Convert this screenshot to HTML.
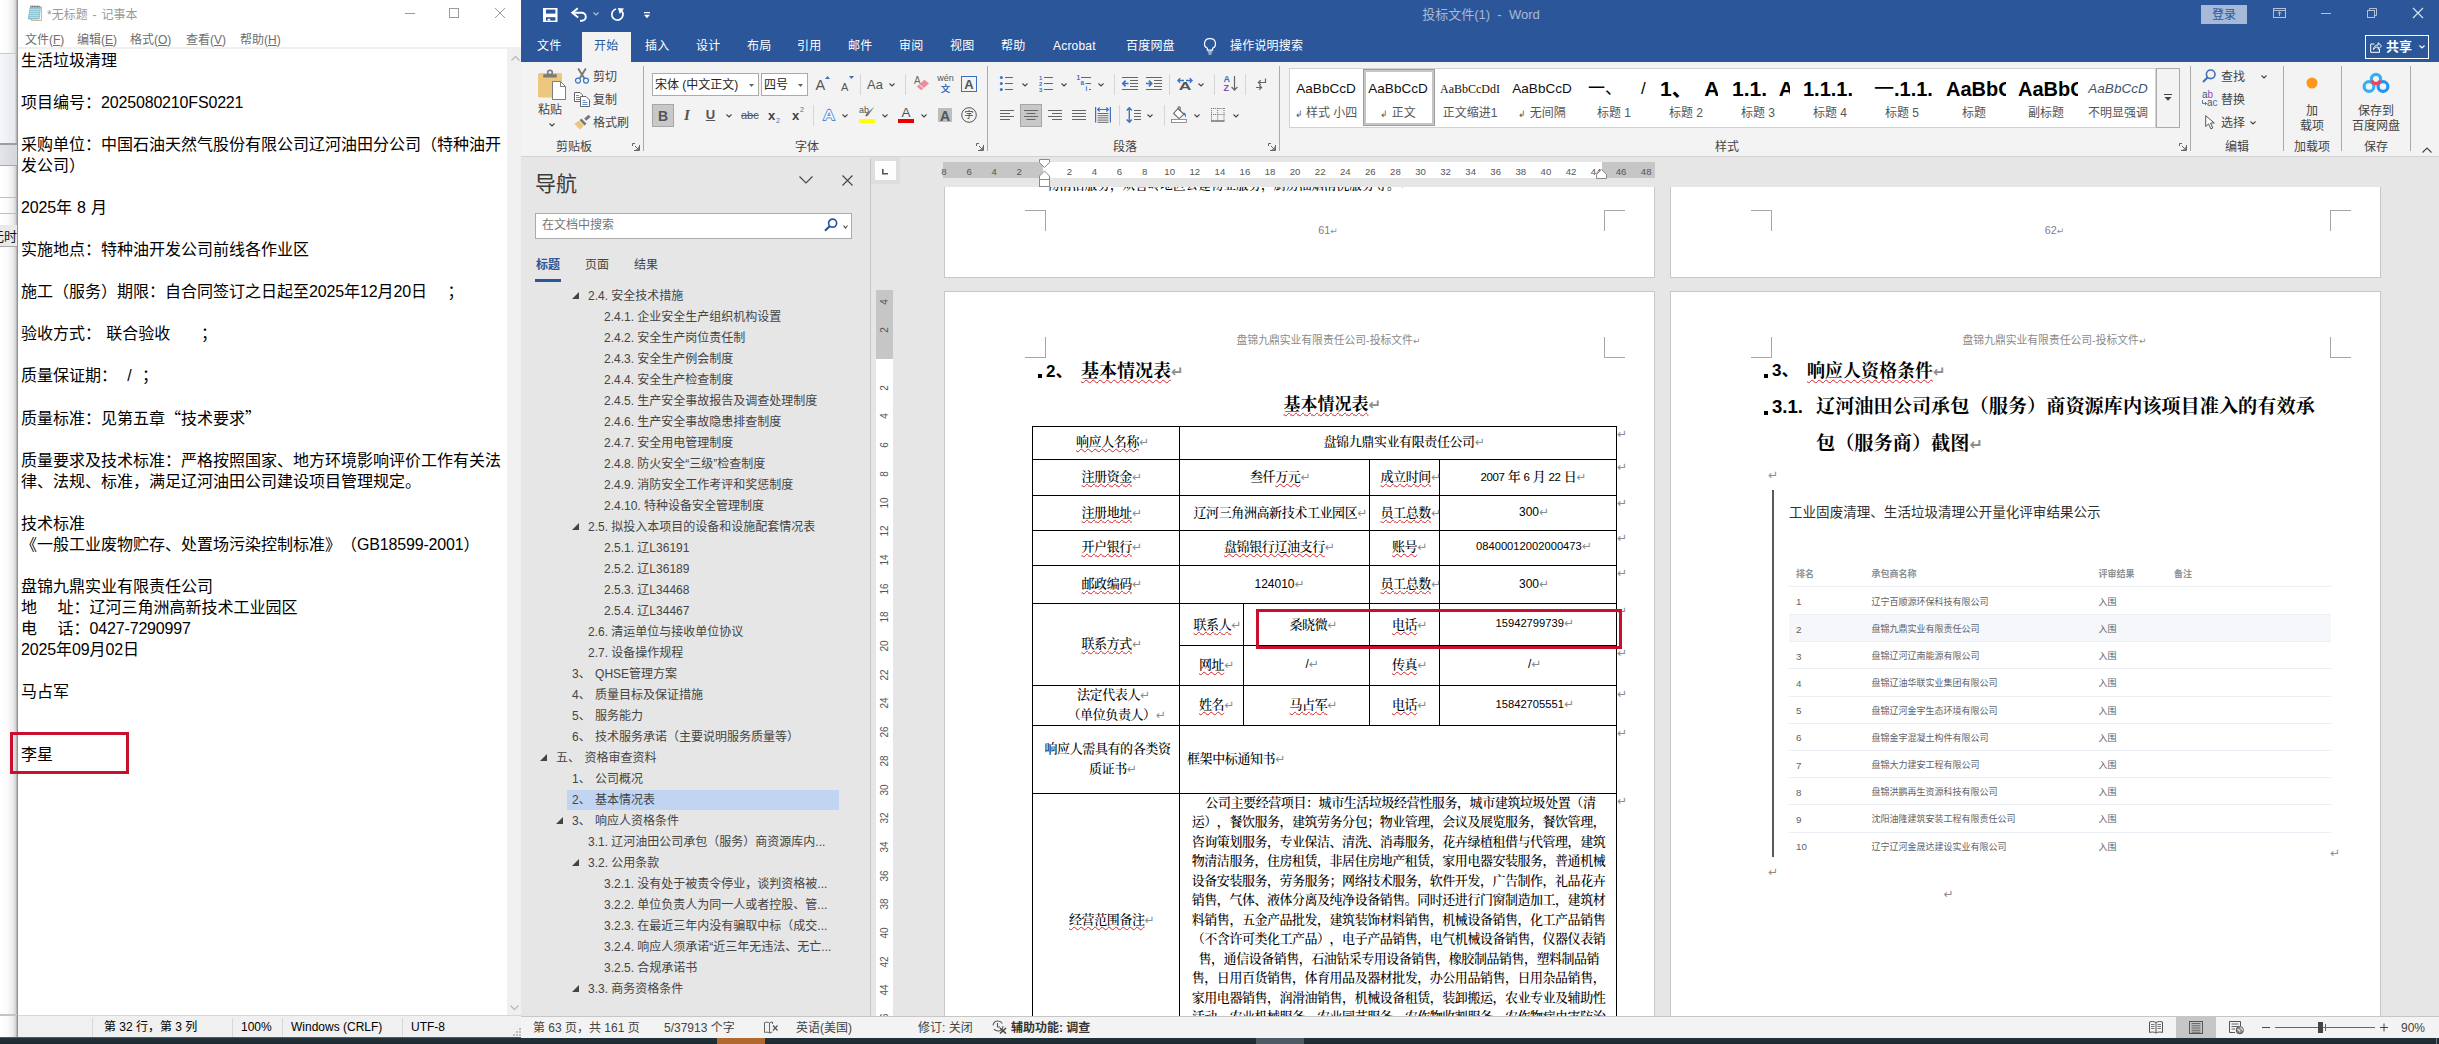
<!DOCTYPE html>
<html lang="zh-CN">
<head>
<meta charset="utf-8">
<title>screenshot</title>
<style>
*{box-sizing:border-box;margin:0;padding:0}
html,body{width:2439px;height:1044px;overflow:hidden;background:#e6e6e6}
body{position:relative;text-spacing-trim:space-all;font-family:"Liberation Sans","Noto Sans CJK SC",sans-serif;font-size:12px;color:#000}
.abs{position:absolute}
.t{position:absolute;white-space:nowrap}
svg{position:absolute;overflow:visible}
u{text-decoration:underline}
.song{font-family:"Liberation Serif","Noto Serif CJK SC",serif}
.songsans{font-family:"Liberation Sans","Noto Serif CJK SC",serif}
.pm{color:#8c8c8c;font-family:"DejaVu Sans","Liberation Sans",sans-serif}
.wavy{text-decoration:underline wavy #d8232a;text-decoration-thickness:1px;text-underline-offset:2px;text-decoration-skip-ink:none}
/* left strip */
#strip{left:0;top:0;width:18px;height:1038px;background:linear-gradient(90deg,#ffffff 0,#fbfbfb 7px,#ececec 13px,#d0d0d0 16px,#9b9b9b 17px,#8a8a8a 18px)}
/* notepad */
#np{left:18px;top:0;width:503px;height:1038px;background:#fff;overflow:hidden}
#np .menu .t{font-size:12px;color:#6e6e6e}
#nptext{left:3px;top:50px;word-spacing:.7px;font-size:16px;line-height:21px;white-space:pre;color:#000}
#np .status .t{font-size:12px;color:#000}
#np .status i{position:absolute;top:2px;width:1px;height:19px;background:#d7d7d7}
/* word */
#word{left:521px;top:0;width:1918px;height:1038px;background:#e6e6e6;overflow:hidden}
</style>
</head>
<body>

<!-- LEFT STRIP: sliver of a background window -->
<div id="strip" class="abs">
<div class="abs" style="left:0px;top:53px;width:17px;height:1px;background:#c9c9c9"></div>
<div class="abs" style="left:0px;top:54px;width:15px;height:89px;background:linear-gradient(90deg,#f6f7f9,#e6e9ed)"></div>
<div class="abs" style="left:0px;top:143px;width:17px;height:2px;background:#9d9d9d"></div>
<div class="abs" style="left:0px;top:145px;width:17px;height:20px;background:linear-gradient(90deg,#e3e5e9,#d3d6da)"></div>
<div class="abs" style="left:0px;top:165px;width:17px;height:1px;background:#a9a9a9"></div>
<div class="abs" style="left:0px;top:197px;width:17px;height:1px;background:#bdbdbd"></div>
<div class="abs" style="left:0px;top:213px;width:17px;height:1px;background:#bdbdbd"></div>
<div class="abs" style="left:0px;top:225px;width:17px;height:22px;background:#e9e9e9;border-bottom:1px solid #a9a9a9"></div>
<span class="t" style="left:-9px;top:229px;font-size:13px;line-height:15px;color:#111">无时</span>
<div class="abs" style="left:0px;top:1014px;width:17px;height:2px;background:#c4c4c4"></div>
</div>
<!-- NOTEPAD -->
<div id="np" class="abs">
<svg style="left:9px;top:4px" width="17" height="18" viewBox="0 0 17 18">
<path d="M3.5 3 L14.5 3 L14.5 16.5 L4.5 16.5 Z" fill="#fbfbf6" stroke="#b9a77f" stroke-width="0.8"/>
<path d="M3.2 3 L13.4 3 L12.2 15 L1.2 15 Z" fill="#8fc6d6" stroke="#6aa9bd" stroke-width="0.6"/>
<path d="M3 5.5H13M2.8 7.5H12.8M2.6 9.5H12.6M2.4 11.5H12.4M2.2 13.5H12.2" stroke="#c9e6ee" stroke-width="0.7"/>
<path d="M4 3V1.6M5.6 3V1.6M7.2 3V1.6M8.8 3V1.6M10.4 3V1.6M12 3V1.6" stroke="#333" stroke-width="0.7"/>
</svg>
<span class="t" style="left:29px;top:7.0px;font-size:12px;line-height:16px;color:#9a9a9a;word-spacing:1.6px">*无标题 - 记事本</span>
<svg style="left:387px;top:13px" width="10" height="1" viewBox="0 0 10 1"><path d="M0 .5H10" stroke="#9a9a9a"/></svg>
<svg style="left:431px;top:8px" width="10" height="10" viewBox="0 0 10 10"><rect x=".5" y=".5" width="9" height="9" fill="none" stroke="#9a9a9a"/></svg>
<svg style="left:477px;top:8px" width="10" height="10" viewBox="0 0 10 10"><path d="M0 0L10 10M10 0L0 10" stroke="#9a9a9a"/></svg>
<div class="menu abs" style="left:0;top:28px;width:503px;height:21px;border-bottom:2px solid #f0f0f0">
<span class="t" style="left:7px;top:4px;line-height:16px">文件(<u>F</u>)</span>
<span class="t" style="left:59px;top:4px;line-height:16px">编辑(<u>E</u>)</span>
<span class="t" style="left:112px;top:4px;line-height:16px">格式(<u>O</u>)</span>
<span class="t" style="left:168px;top:4px;line-height:16px">查看(<u>V</u>)</span>
<span class="t" style="left:222px;top:4px;line-height:16px">帮助(<u>H</u>)</span>
</div>
<div id="nptext" class="abs">生活垃圾清理

项目编号：<span style="letter-spacing:-.17px">2025080210FS0221</span>

采购单位：中国石油天然气股份有限公司辽河油田分公司（特种油开
发公司）

<span style="letter-spacing:-.17px">2025</span>年 8 月

实施地点：特种油开发公司前线各作业区

施工（服务）期限：自合同签订之日起至<span style="letter-spacing:-.17px">2025</span>年<span style="letter-spacing:-.17px">12</span>月<span style="letter-spacing:-.17px">20</span>日    ；

验收方式： 联合验收      ；

质量保证期：  /  ；

质量标准：见第五章<span style="font-family:Noto Sans CJK SC,sans-serif">“</span>技术要求<span style="font-family:Noto Sans CJK SC,sans-serif">”</span>

质量要求及技术标准：严格按照国家、地方环境影响评价工作有关法
律、法规、标准，满足辽河油田公司建设项目管理规定。

技术标准
《一般工业废物贮存、处置场污染控制标准》（<span style="letter-spacing:-.17px">GB18599-2001</span>）

盘锦九鼎实业有限责任公司
地    址：辽河三角洲高新技术工业园区
电    话：<span style="letter-spacing:-.17px">0427-7290997</span>
<span style="letter-spacing:-.17px">2025</span>年<span style="letter-spacing:-.17px">09</span>月<span style="letter-spacing:-.17px">02</span>日

马占军


李星</div>
<div class="abs" style="left:489px;top:49px;width:14px;height:966px;background:#f0f0f0">
<svg style="left:3.5px;top:6px" width="9" height="6" viewBox="0 0 9 6"><path d="M.5 5.5L4.5 1.5L8.5 5.5" fill="none" stroke="#bcbcbc" stroke-width="1.4"/></svg>
<svg style="left:3px;top:955.5px" width="9" height="6" viewBox="0 0 9 6"><path d="M.5 .5L4.5 4.5L8.5 .5" fill="none" stroke="#bcbcbc" stroke-width="1.4"/></svg>
</div>
<div class="status abs" style="left:0;top:1015px;width:503px;height:22px;background:#f0f0f0;border-top:1px solid #d7d7d7">
<i style="left:74px"></i><i style="left:214px"></i><i style="left:264px"></i><i style="left:384px"></i>
<span class="t" style="left:86px;top:3px;line-height:16px">第 32 行，第 3 列</span>
<span class="t" style="left:223px;top:3px;line-height:16px">100%</span>
<span class="t" style="left:273px;top:3px;line-height:16px">Windows (CRLF)</span>
<span class="t" style="left:393px;top:3px;line-height:16px">UTF-8</span>
<svg style="left:494px;top:11px" width="9" height="9" viewBox="0 0 9 9"><path d="M7 1h2v2h-2zM4 4h2v2h-2zM7 4h2v2h-2zM1 7h2v2h-2zM4 7h2v2h-2zM7 7h2v2h-2z" fill="#bdbdbd"/></svg>
</div>
</div>
<!-- WORD -->
<div id="word" class="abs"><div class="abs" style="left:-521px;top:0;width:2439px;height:1038px">
<!-- word title bar + tab row -->
<div class="abs" style="left:521px;top:0px;width:1918px;height:62px;background:#2b579a"></div>
<svg style="left:542.5px;top:8px" width="15" height="14" viewBox="0 0 15 14"><rect x="0" y="0" width="14.5" height="14" fill="#fff"/><rect x="3" y="1.6" width="9.4" height="4" fill="#2b579a"/><rect x="3" y="9.2" width="9.4" height="3.4" fill="#2b579a"/><rect x="4.7" y="10.8" width="2.5" height="1.8" fill="#fff"/></svg>
<svg style="left:571px;top:7px" width="16" height="15" viewBox="0 0 16 15"><path d="M6.8 1.2L1.2 5.7L7.2 10.6" fill="none" stroke="#fff" stroke-width="1.9"/><path d="M1.8 5.7H10.8A4 4 0 0 1 10.8 13.7H9" fill="none" stroke="#fff" stroke-width="1.9"/></svg>
<svg style="left:592.5px;top:12px" width="6" height="4" viewBox="0 0 6 4"><path d="M.5 .5L3.0 3L5.5 .5" fill="none" stroke="#b5c4de" stroke-width="1.1"/></svg>
<svg style="left:610px;top:7px" width="16" height="15" viewBox="0 0 16 15"><path d="M6.14 2.04A5.6 5.6 0 1 0 11.69 3.9" fill="none" stroke="#fff" stroke-width="1.7"/><path d="M7.9 1.1L14 1.6L9.8 6.9Z" fill="#fff"/></svg>
<svg style="left:643.5px;top:11.7px" width="6" height="7" viewBox="0 0 6 7"><path d="M0 .6H6" stroke="#fff" stroke-width="1.2"/><path d="M0 2.8H6L3 6.3Z" fill="#fff"/></svg>
<span class="t" style="left:1481px;top:6.0px;font-size:13px;line-height:17px;color:#a9b9d6;transform:translateX(-50%);">投标文件(1)&nbsp; -&nbsp; Word</span>
<div class="abs" style="left:2201px;top:5px;width:46px;height:19px;background:#a6b9d8"></div>
<span class="t" style="left:2224px;top:6.5px;font-size:12px;line-height:16px;color:#2b579a;transform:translateX(-50%);">登录</span>
<svg style="left:2273px;top:8px" width="13" height="10" viewBox="0 0 13 10"><rect x=".5" y=".5" width="12" height="9" fill="none" stroke="#b3c1dc" stroke-width="1"/><path d="M.5 2.5H12.5" stroke="#b3c1dc"/><path d="M6.5 8V4M4.7 5.6L6.5 3.8L8.3 5.6" fill="none" stroke="#b3c1dc" stroke-width="1"/></svg>
<svg style="left:2321px;top:12.5px" width="10" height="1" viewBox="0 0 10 1"><path d="M0 .5H10" stroke="#b3c1dc"/></svg>
<svg style="left:2367px;top:8px" width="10" height="10" viewBox="0 0 10 10"><rect x=".5" y="2.5" width="7" height="7" fill="none" stroke="#b3c1dc"/><path d="M2.5 2.5V.5H9.5V7.5H7.5" fill="none" stroke="#b3c1dc"/></svg>
<svg style="left:2413px;top:8px" width="10" height="10" viewBox="0 0 10 10"><path d="M0 0L10 10M10 0L0 10" stroke="#dfe6f2" stroke-width="1.1"/></svg>
<div class="abs" style="left:582px;top:32px;width:49px;height:30px;background:#f3f3f3"></div>
<span class="t" style="left:537px;top:38.0px;font-size:12px;line-height:16px;color:#fff;letter-spacing:.2px">文件</span>
<span class="t" style="left:594px;top:38.0px;font-size:12px;line-height:16px;color:#2b579a;letter-spacing:.2px">开始</span>
<span class="t" style="left:645px;top:38.0px;font-size:12px;line-height:16px;color:#fff;letter-spacing:.2px">插入</span>
<span class="t" style="left:696px;top:38.0px;font-size:12px;line-height:16px;color:#fff;letter-spacing:.2px">设计</span>
<span class="t" style="left:747px;top:38.0px;font-size:12px;line-height:16px;color:#fff;letter-spacing:.2px">布局</span>
<span class="t" style="left:797px;top:38.0px;font-size:12px;line-height:16px;color:#fff;letter-spacing:.2px">引用</span>
<span class="t" style="left:848px;top:38.0px;font-size:12px;line-height:16px;color:#fff;letter-spacing:.2px">邮件</span>
<span class="t" style="left:899px;top:38.0px;font-size:12px;line-height:16px;color:#fff;letter-spacing:.2px">审阅</span>
<span class="t" style="left:950px;top:38.0px;font-size:12px;line-height:16px;color:#fff;letter-spacing:.2px">视图</span>
<span class="t" style="left:1001px;top:38.0px;font-size:12px;line-height:16px;color:#fff;letter-spacing:.2px">帮助</span>
<span class="t" style="left:1053px;top:38.0px;font-size:12px;line-height:16px;color:#fff;letter-spacing:.2px">Acrobat</span>
<span class="t" style="left:1126px;top:38.0px;font-size:12px;line-height:16px;color:#fff;letter-spacing:.2px">百度网盘</span>
<span class="t" style="left:1230px;top:38.0px;font-size:12px;line-height:16px;color:#fff;letter-spacing:.2px">操作说明搜索</span>
<svg style="left:1204px;top:38px" width="12" height="17" viewBox="0 0 12 17"><path d="M6 .7A5 5 0 0 1 8.6 10.2V12.2H3.4V10.2A5 5 0 0 1 6 .7Z" fill="none" stroke="#fff" stroke-width="1.2"/><path d="M3.8 14H8.2M4.6 16H7.4" stroke="#fff" stroke-width="1.1"/></svg>
<div class="abs" style="left:2365px;top:35px;width:64px;height:24px;border:1px solid #fff"></div>
<svg style="left:2370px;top:41px" width="12" height="12" viewBox="0 0 12 12"><path d="M4.5 3H.7V11.3H9.5V8" fill="none" stroke="#fff" stroke-width="1"/><path d="M3.5 8.5C3.8 5.2 6 4 8.2 4V1.7L11.6 5L8.2 8.3V6C6 6 4.5 6.8 3.5 8.5Z" fill="none" stroke="#fff" stroke-width="1"/></svg>
<span class="t" style="left:2386px;top:37.5px;font-size:13px;line-height:17px;color:#fff;font-weight:bold">共享</span>
<svg style="left:2418.5px;top:45px" width="6" height="4" viewBox="0 0 6 4"><path d="M.5 .5L3.0 3L5.5 .5" fill="none" stroke="#fff" stroke-width="1.1"/></svg>
<!-- ribbon body -->
<div class="abs" style="left:521px;top:62px;width:1918px;height:94px;background:#f3f3f3"></div>
<div class="abs" style="left:521px;top:156px;width:1918px;height:1px;background:#d4d4d4"></div>
<svg style="left:537px;top:69px" width="30" height="32" viewBox="0 0 30 32">
<rect x="1" y="4" width="24" height="24.6" rx="1.6" fill="#edc77e"/>
<circle cx="13" cy="3.6" r="2.3" fill="none" stroke="#7a7a7a" stroke-width="1.6"/><rect x="6.2" y="5.2" width="13.6" height="3.2" rx=".5" fill="#7a7a7a"/>
<path d="M15.5 12.5H23.5L28.5 17.5V30.5H15.5Z" fill="#fff" stroke="#7d7d7d" stroke-width="1"/><path d="M23.5 12.5V17.5H28.5" fill="none" stroke="#7d7d7d"/></svg>
<span class="t" style="left:550px;top:102.1px;font-size:12px;line-height:16px;color:#444;transform:translateX(-50%);">粘贴</span>
<svg style="left:548.5px;top:122.5px" width="6" height="4" viewBox="0 0 6 4"><path d="M.5 .5L3.0 3L5.5 .5" fill="none" stroke="#444" stroke-width="1.1"/></svg>
<svg style="left:574px;top:68px" width="16" height="16" viewBox="0 0 16 16"><path d="M4.2 .6L10.4 10.6M11.8 .6L5.6 10.6" stroke="#787878" stroke-width="1.9" fill="none"/><circle cx="4" cy="12.6" r="2.5" fill="none" stroke="#3b73c4" stroke-width="1.2"/><circle cx="12" cy="12.6" r="2.5" fill="none" stroke="#3b73c4" stroke-width="1.2"/></svg>
<span class="t" style="left:593px;top:69.1px;font-size:12px;line-height:16px;color:#444;">剪切</span>
<svg style="left:574px;top:92px" width="16" height="15" viewBox="0 0 16 15"><path d="M.5 .5H6L8.5 3V9.5H.5Z" fill="#fff" stroke="#666"/><path d="M2 3.5H5M2 5.5H6.5M2 7.5H6.5" stroke="#3b6fc0" stroke-width=".8"/><path d="M6.5 4.5H12L15.5 8V14.5H6.5Z" fill="#fff" stroke="#666"/><path d="M8.5 8.5H11.5M8.5 10.5H13.5M8.5 12.5H13.5" stroke="#3b6fc0" stroke-width=".8"/></svg>
<span class="t" style="left:593px;top:92.1px;font-size:12px;line-height:16px;color:#444;">复制</span>
<svg style="left:574px;top:114px" width="17" height="16" viewBox="0 0 17 16"><path d="M10.2 4.6L14.6 .8L16.6 3L12.2 6.8Z" fill="#777"/><path d="M7.4 4.4L12.6 9.8L10.4 11.6L5.6 6.2Z" fill="#777"/><path d="M5 6.8L9.8 12L5.6 15.6L.4 9.6Z" fill="#ecc47a"/></svg>
<span class="t" style="left:593px;top:115.1px;font-size:12px;line-height:16px;color:#444;">格式刷</span>
<span class="t" style="left:574px;top:138.6px;font-size:12px;line-height:16px;color:#444;transform:translateX(-50%);">剪贴板</span>
<svg style="left:632px;top:143px" width="8" height="8" viewBox="0 0 8 8"><path d="M.5 3V.5H3M.5 .5" fill="none" stroke="#666" stroke-width="1"/><path d="M7.5 2V7.5H2" fill="none" stroke="#666" stroke-width="1"/><path d="M3 3L6.6 6.6M6.8 3.8V6.8H3.8" fill="none" stroke="#666" stroke-width="1"/></svg>
<div class="abs" style="left:643px;top:66px;width:1px;height:85px;background:#ababab"></div>
<div class="abs" style="left:652px;top:73px;width:107px;height:23px;background:#fff;border:1px solid #ababab"></div>
<span class="t" style="left:655px;top:77.1px;font-size:12px;line-height:16px;color:#222;">宋体 (中文正文)</span>
<svg style="left:749px;top:83.5px" width="5" height="3" viewBox="0 0 5 3"><path d="M0 0H5L2.5 3Z" fill="#666"/></svg>
<div class="abs" style="left:761px;top:73px;width:47px;height:23px;background:#fff;border:1px solid #ababab"></div>
<span class="t" style="left:764px;top:77.1px;font-size:12px;line-height:16px;color:#222;">四号</span>
<svg style="left:798px;top:83.5px" width="5" height="3" viewBox="0 0 5 3"><path d="M0 0H5L2.5 3Z" fill="#666"/></svg>
<span class="t" style="left:815.5px;top:76.2px;font-size:14.5px;line-height:18.5px;color:#555;">A</span>
<svg style="left:825px;top:76px" width="5" height="3" viewBox="0 0 5 3"><path d="M0 3L2.5 0L5 3Z" fill="#3b6fc0"/></svg>
<span class="t" style="left:841px;top:79.5px;font-size:11px;line-height:15px;color:#555;">A</span>
<svg style="left:849px;top:76px" width="5" height="3" viewBox="0 0 5 3"><path d="M0 0L2.5 3L5 0Z" fill="#3b6fc0"/></svg>
<div class="abs" style="left:860px;top:74px;width:1px;height:21px;background:#d6d6d6"></div>
<span class="t" style="left:867px;top:75.5px;font-size:13px;line-height:17px;color:#555;">Aa</span>
<svg style="left:888.5px;top:82.5px" width="6" height="4" viewBox="0 0 6 4"><path d="M.5 .5L3.0 3L5.5 .5" fill="none" stroke="#444" stroke-width="1.1"/></svg>
<div class="abs" style="left:905px;top:74px;width:1px;height:21px;background:#d6d6d6"></div>
<span class="t" style="left:914px;top:74.0px;font-size:10px;line-height:14px;color:#666;">A</span>
<svg style="left:915px;top:79px" width="15" height="12" viewBox="0 0 15 12"><path d="M9.5 .8L14 4.4L6.2 11.2L1.8 7.6Z" fill="#ee8b9c"/><path d="M4.2 5.6L8.6 9.2" stroke="#f3f3f3" stroke-width="1"/></svg>
<span class="t" style="left:945.5px;top:72.0px;font-size:9px;line-height:13px;color:#555;transform:translateX(-50%);">wén</span>
<span class="t" style="left:945.5px;top:82.2px;font-size:9.5px;line-height:13.5px;color:#3b6fc0;transform:translateX(-50%);font-weight:bold">文</span>
<div class="abs" style="left:961px;top:76px;width:16px;height:16px;border:1px solid #3b6fc0"></div>
<span class="t" style="left:969px;top:76.0px;font-size:13px;line-height:17px;color:#555;transform:translateX(-50%);font-weight:bold">A</span>
<div class="abs" style="left:652px;top:104px;width:22px;height:23px;background:#c8c8c8;border:1px solid #a6a6a6"></div>
<span class="t" style="left:663px;top:106.5px;font-size:14px;line-height:18px;color:#555;transform:translateX(-50%);font-weight:bold">B</span>
<span class="t" style="left:687px;top:105.5px;font-size:15px;line-height:19px;color:#555;transform:translateX(-50%);font-style:italic;font-weight:bold;font-family:Liberation Serif,serif">I</span>
<span class="t" style="left:710.5px;top:106.0px;font-size:13px;line-height:17px;color:#555;transform:translateX(-50%);font-weight:bold"><u>U</u></span>
<svg style="left:725.5px;top:113.5px" width="6" height="4" viewBox="0 0 6 4"><path d="M.5 .5L3.0 3L5.5 .5" fill="none" stroke="#444" stroke-width="1.1"/></svg>
<span class="t" style="left:741px;top:107.5px;font-size:11px;line-height:15px;color:#555;"><s>abc</s></span>
<span class="t" style="left:768px;top:106.5px;font-size:13px;line-height:17px;color:#444;font-weight:bold">x</span>
<span class="t" style="left:776px;top:114.5px;font-size:7px;line-height:11px;color:#3b6fc0;">2</span>
<span class="t" style="left:792px;top:106.5px;font-size:13px;line-height:17px;color:#444;font-weight:bold">x</span>
<span class="t" style="left:800px;top:103.5px;font-size:7px;line-height:11px;color:#3b6fc0;">2</span>
<div class="abs" style="left:813px;top:105px;width:1px;height:21px;background:#d6d6d6"></div>
<span class="t" style="left:829px;top:105.2px;font-size:15.5px;line-height:19.5px;color:#fff;transform:translateX(-50%);-webkit-text-stroke:2px #4a86d4;paint-order:stroke fill;text-shadow:0 0 2px #9cc0ee">A</span>
<svg style="left:841.5px;top:113.5px" width="6" height="4" viewBox="0 0 6 4"><path d="M.5 .5L3.0 3L5.5 .5" fill="none" stroke="#444" stroke-width="1.1"/></svg>
<span class="t" style="left:859px;top:103.5px;font-size:9px;line-height:13px;color:#555;">ab</span>
<svg style="left:864px;top:106px" width="12" height="11" viewBox="0 0 12 11"><path d="M10.5 .5L4 9.5L2 8Z" fill="#777"/><path d="M2 8L4 9.5L1.5 10.5Z" fill="#444"/></svg>
<div class="abs" style="left:859px;top:119px;width:16px;height:4px;background:#ffff00"></div>
<svg style="left:881.5px;top:113.5px" width="6" height="4" viewBox="0 0 6 4"><path d="M.5 .5L3.0 3L5.5 .5" fill="none" stroke="#444" stroke-width="1.1"/></svg>
<span class="t" style="left:906px;top:104.2px;font-size:13.5px;line-height:17.5px;color:#555;transform:translateX(-50%);">A</span>
<div class="abs" style="left:898px;top:119px;width:16px;height:4px;background:#e60000"></div>
<svg style="left:920.5px;top:113.5px" width="6" height="4" viewBox="0 0 6 4"><path d="M.5 .5L3.0 3L5.5 .5" fill="none" stroke="#444" stroke-width="1.1"/></svg>
<div class="abs" style="left:938px;top:108px;width:14px;height:14px;background:#bdbdbd"></div>
<span class="t" style="left:945px;top:106.5px;font-size:14px;line-height:18px;color:#555;transform:translateX(-50%);font-weight:bold">A</span>
<svg style="left:961px;top:107px" width="16" height="16" viewBox="0 0 16 16"><circle cx="8" cy="8" r="7.3" fill="none" stroke="#555"/></svg>
<span class="t" style="left:969px;top:108.5px;font-size:9px;line-height:13px;color:#444;transform:translateX(-50%);">字</span>
<span class="t" style="left:807px;top:138.6px;font-size:12px;line-height:16px;color:#444;transform:translateX(-50%);">字体</span>
<svg style="left:976px;top:143px" width="8" height="8" viewBox="0 0 8 8"><path d="M.5 3V.5H3M.5 .5" fill="none" stroke="#666" stroke-width="1"/><path d="M7.5 2V7.5H2" fill="none" stroke="#666" stroke-width="1"/><path d="M3 3L6.6 6.6M6.8 3.8V6.8H3.8" fill="none" stroke="#666" stroke-width="1"/></svg>
<div class="abs" style="left:987px;top:66px;width:1px;height:85px;background:#ababab"></div>
<svg style="left:999px;top:75px" width="15" height="17" viewBox="0 0 15 17"><circle cx="2.3" cy="2.5" r="1.5" fill="#3b73c4"/><circle cx="2.3" cy="8.5" r="1.5" fill="#3b73c4"/><circle cx="2.3" cy="14.5" r="1.5" fill="#3b73c4"/><path d="M6 2.5H14M6 8.5H14M6 14.5H14" stroke="#666" stroke-width="1"/></svg>
<svg style="left:1021.5px;top:82.5px" width="6" height="4" viewBox="0 0 6 4"><path d="M.5 .5L3.0 3L5.5 .5" fill="none" stroke="#444" stroke-width="1.1"/></svg>
<svg style="left:1038px;top:75px" width="15" height="17" viewBox="0 0 15 17"><path d="M6 2.5H15M6 8.5H15M6 14.5H15" stroke="#666" stroke-width="1"/></svg>
<span class="t" style="left:1039px;top:72.5px;font-size:6px;line-height:10px;color:#3b73c4;font-weight:bold">1</span>
<span class="t" style="left:1039px;top:78.5px;font-size:6px;line-height:10px;color:#3b73c4;font-weight:bold">2</span>
<span class="t" style="left:1039px;top:84.5px;font-size:6px;line-height:10px;color:#3b73c4;font-weight:bold">3</span>
<svg style="left:1060.5px;top:82.5px" width="6" height="4" viewBox="0 0 6 4"><path d="M.5 .5L3.0 3L5.5 .5" fill="none" stroke="#444" stroke-width="1.1"/></svg>
<svg style="left:1076px;top:75px" width="16" height="17" viewBox="0 0 16 17"><path d="M5 2.5H15M9.5 8.5H15M13 14.5H15" stroke="#666" stroke-width="1"/></svg>
<span class="t" style="left:1076.5px;top:73.2px;font-size:6.5px;line-height:10.5px;color:#3b73c4;font-weight:bold">1</span>
<span class="t" style="left:1080.5px;top:78.2px;font-size:6.5px;line-height:10.5px;color:#3b73c4;font-weight:bold">a</span>
<span class="t" style="left:1085.5px;top:84.2px;font-size:6.5px;line-height:10.5px;color:#3b73c4;font-weight:bold">i</span>
<svg style="left:1097.5px;top:82.5px" width="6" height="4" viewBox="0 0 6 4"><path d="M.5 .5L3.0 3L5.5 .5" fill="none" stroke="#444" stroke-width="1.1"/></svg>
<div class="abs" style="left:1114px;top:74px;width:1px;height:21px;background:#d6d6d6"></div>
<svg style="left:1122px;top:77px" width="16" height="13" viewBox="0 0 16 13"><path d="M0 .5H16M8 3.5H16M8 6.5H16M8 9.5H16M0 12.5H16" stroke="#666" stroke-width="1"/><path d="M6.5 6.5H1M3.6 3.6L.8 6.5L3.6 9.4" fill="none" stroke="#3b73c4" stroke-width="1.7"/></svg>
<svg style="left:1146px;top:77px" width="16" height="13" viewBox="0 0 16 13"><path d="M0 .5H16M8 3.5H16M8 6.5H16M8 9.5H16M0 12.5H16" stroke="#666" stroke-width="1"/><path d="M0 6.5H5.5M2.9 3.6L5.7 6.5L2.9 9.4" fill="none" stroke="#3b73c4" stroke-width="1.7"/></svg>
<div class="abs" style="left:1169px;top:74px;width:1px;height:21px;background:#d6d6d6"></div>
<svg style="left:1177px;top:77px" width="16" height="7" viewBox="0 0 16 7"><path d="M7 3.5H1M3.2 1.2L.9 3.5L3.2 5.8M9 3.5H15M12.8 1.2L15.1 3.5L12.8 5.8" fill="none" stroke="#3b73c4" stroke-width="1.3"/></svg>
<span class="t" style="left:1185px;top:79.5px;font-size:10px;line-height:14px;color:#555;transform:translateX(-50%);font-weight:bold;transform:translateX(-50%) scaleX(1.75)">A</span>
<svg style="left:1197.5px;top:82.5px" width="6" height="4" viewBox="0 0 6 4"><path d="M.5 .5L3.0 3L5.5 .5" fill="none" stroke="#444" stroke-width="1.1"/></svg>
<div class="abs" style="left:1214px;top:74px;width:1px;height:21px;background:#d6d6d6"></div>
<span class="t" style="left:1223.5px;top:73.0px;font-size:9px;line-height:13px;color:#3b73c4;font-weight:bold">A</span>
<span class="t" style="left:1223.5px;top:81.5px;font-size:9px;line-height:13px;color:#8a4fb5;font-weight:bold">Z</span>
<svg style="left:1231px;top:76px" width="7" height="15" viewBox="0 0 7 15"><path d="M3.5 0V14M.6 11L3.5 14.2L6.4 11" fill="none" stroke="#666" stroke-width="1.2"/></svg>
<div class="abs" style="left:1245px;top:74px;width:1px;height:21px;background:#d6d6d6"></div>
<svg style="left:1255px;top:78px" width="12" height="12" viewBox="0 0 12 12"><path d="M10.5 .5V4.5H3.5M5.8 2.2L3.3 4.5L5.8 6.8" fill="none" stroke="#666" stroke-width="1.2"/><path d="M1 9.5H6.5M4.2 7.3L6.6 9.5L4.2 11.7" fill="none" stroke="#666" stroke-width="1.2"/></svg>
<svg style="left:1000px;top:110px" width="15" height="11" viewBox="0 0 15 11"><path d="M0 0.5H14M0 3.5H10M0 6.5H14M0 9.5H10" stroke="#666" stroke-width="1"/></svg>
<div class="abs" style="left:1020px;top:104px;width:22px;height:23px;background:#c8c8c8;border:1px solid #a6a6a6"></div>
<svg style="left:1024px;top:110px" width="15" height="11" viewBox="0 0 15 11"><path d="M0 0.5H14M2.5 3.5H11.5M0 6.5H14M2.5 9.5H11.5" stroke="#666" stroke-width="1"/></svg>
<svg style="left:1048px;top:110px" width="15" height="11" viewBox="0 0 15 11"><path d="M0 0.5H14M4 3.5H14M0 6.5H14M4 9.5H14" stroke="#666" stroke-width="1"/></svg>
<svg style="left:1072px;top:110px" width="15" height="11" viewBox="0 0 15 11"><path d="M0 0.5H14M0 3.5H14M0 6.5H14M0 9.5H14" stroke="#666" stroke-width="1"/></svg>
<svg style="left:1095px;top:107px" width="16" height="16" viewBox="0 0 16 16"><path d="M.6 0V15.5M15.4 0V15.5" stroke="#3b73c4" stroke-width="1.2"/><path d="M2.5 2.5H13.5M4.7 .5L2.6 2.5L4.7 4.5M11.3 .5L13.4 2.5L11.3 4.5" fill="none" stroke="#3b73c4" stroke-width="1.2"/><path d="M2.5 6.5H13.5M2.5 8.7H13.5M2.5 10.9H13.5M2.5 13.1H13.5M2.5 15.3H13.5" stroke="#666" stroke-width="1"/></svg>
<div class="abs" style="left:1119px;top:105px;width:1px;height:21px;background:#d6d6d6"></div>
<svg style="left:1126px;top:107px" width="16" height="16" viewBox="0 0 16 16"><path d="M3.3 .8V15.2M.7 3.6L3.3 .8L5.9 3.6M.7 12.4L3.3 15.2L5.9 12.4" fill="none" stroke="#3b73c4" stroke-width="1.4"/><path d="M8 3.5H15M8 6.5H15M8 9.5H15M8 12.5H15" stroke="#666" stroke-width="1"/></svg>
<svg style="left:1146.5px;top:113.5px" width="6" height="4" viewBox="0 0 6 4"><path d="M.5 .5L3.0 3L5.5 .5" fill="none" stroke="#444" stroke-width="1.1"/></svg>
<div class="abs" style="left:1164px;top:105px;width:1px;height:21px;background:#d6d6d6"></div>
<svg style="left:1171px;top:106px" width="17" height="17" viewBox="0 0 17 17"><path d="M7 2.5L12.8 8.3L8 12.6L2.6 7.4Z" fill="#fff" stroke="#666" stroke-width="1.1"/><path d="M7.2 4V.9H9.2V5" fill="none" stroke="#666" stroke-width="1"/><path d="M12.6 6.2C15.2 7.4 15.6 10 14.4 11.6C14.2 9.8 13.6 8.8 12.2 8.2Z" fill="#3b73c4"/><rect x=".5" y="13.5" width="15" height="3" fill="#fff" stroke="#888" stroke-width=".9"/></svg>
<svg style="left:1193.5px;top:113.5px" width="6" height="4" viewBox="0 0 6 4"><path d="M.5 .5L3.0 3L5.5 .5" fill="none" stroke="#444" stroke-width="1.1"/></svg>
<svg style="left:1211px;top:108px" width="14" height="14" viewBox="0 0 14 14"><path d="M.5 0V13M13 0V13M6.7 0V13M0 .5H13.5M0 6.5H13.5" fill="none" stroke="#666" stroke-width="1" stroke-dasharray="1 1.1"/><path d="M0 13H13.5" stroke="#555" stroke-width="1.2"/></svg>
<svg style="left:1232.5px;top:113.5px" width="6" height="4" viewBox="0 0 6 4"><path d="M.5 .5L3.0 3L5.5 .5" fill="none" stroke="#444" stroke-width="1.1"/></svg>
<span class="t" style="left:1125px;top:138.6px;font-size:12px;line-height:16px;color:#444;transform:translateX(-50%);">段落</span>
<svg style="left:1268px;top:143px" width="8" height="8" viewBox="0 0 8 8"><path d="M.5 3V.5H3M.5 .5" fill="none" stroke="#666" stroke-width="1"/><path d="M7.5 2V7.5H2" fill="none" stroke="#666" stroke-width="1"/><path d="M3 3L6.6 6.6M6.8 3.8V6.8H3.8" fill="none" stroke="#666" stroke-width="1"/></svg>
<div class="abs" style="left:1279px;top:66px;width:1px;height:85px;background:#ababab"></div>
<div class="abs" style="left:1289px;top:68px;width:867px;height:60px;background:#fff;border:1px solid #d2d2d2"></div>
<div class="abs" style="left:1363px;top:69px;width:72px;height:57px;border:3px solid #c6c6c6;outline:1px solid #9d9d9d;outline-offset:-1px"></div>
<div class="abs" style="left:1294px;top:78px;width:64px;height:24px;overflow:hidden;text-align:center;white-space:nowrap;line-height:22px;font-size:13.5px;color:#111">AaBbCcD</div>
<span class="t" style="left:1326px;top:105.1px;font-size:12px;line-height:16px;color:#555;transform:translateX(-50%);"><span style="font-size:9px;color:#555">↲</span> 样式 小四</span>
<div class="abs" style="left:1366px;top:78px;width:64px;height:24px;overflow:hidden;text-align:center;white-space:nowrap;line-height:22px;font-size:13.5px;color:#111">AaBbCcD</div>
<span class="t" style="left:1398px;top:105.1px;font-size:12px;line-height:16px;color:#555;transform:translateX(-50%);"><span style="font-size:9px;color:#555">↲</span> 正文</span>
<div class="abs" style="left:1438px;top:78px;width:64px;height:24px;overflow:hidden;text-align:center;white-space:nowrap;line-height:22px;font-size:12px;color:#111;font-family:Liberation Serif,serif">AaBbCcDdI</div>
<span class="t" style="left:1470px;top:105.1px;font-size:12px;line-height:16px;color:#555;transform:translateX(-50%);">正文缩进1</span>
<div class="abs" style="left:1510px;top:78px;width:64px;height:24px;overflow:hidden;text-align:center;white-space:nowrap;line-height:22px;font-size:13.5px;color:#111">AaBbCcD</div>
<span class="t" style="left:1542px;top:105.1px;font-size:12px;line-height:16px;color:#555;transform:translateX(-50%);"><span style="font-size:9px;color:#555">↲</span> 无间隔</span>
<div class="abs" style="left:1582px;top:78px;width:64px;height:24px;overflow:hidden;text-align:center;white-space:nowrap;line-height:22px;font-size:17px;color:#000;text-align:left;padding-left:6px">一、&nbsp;&nbsp;&nbsp;&nbsp;/</div>
<span class="t" style="left:1614px;top:105.1px;font-size:12px;line-height:16px;color:#555;transform:translateX(-50%);">标题 1</span>
<div class="abs" style="left:1654px;top:78px;width:64px;height:24px;overflow:hidden;text-align:center;white-space:nowrap;line-height:22px;font-size:21px;color:#000;font-weight:bold;text-align:left;padding-left:6px">1、&nbsp;&nbsp;A</div>
<span class="t" style="left:1686px;top:105.1px;font-size:12px;line-height:16px;color:#555;transform:translateX(-50%);">标题 2</span>
<div class="abs" style="left:1726px;top:78px;width:64px;height:24px;overflow:hidden;text-align:center;white-space:nowrap;line-height:22px;font-size:21px;color:#000;font-weight:bold;text-align:left;padding-left:6px">1.1.&nbsp;&nbsp;A</div>
<span class="t" style="left:1758px;top:105.1px;font-size:12px;line-height:16px;color:#555;transform:translateX(-50%);">标题 3</span>
<div class="abs" style="left:1798px;top:78px;width:64px;height:24px;overflow:hidden;text-align:center;white-space:nowrap;line-height:22px;font-size:20px;color:#000;font-weight:bold;text-align:left;padding-left:5px">1.1.1.&nbsp;&nbsp;A</div>
<span class="t" style="left:1830px;top:105.1px;font-size:12px;line-height:16px;color:#555;transform:translateX(-50%);">标题 4</span>
<div class="abs" style="left:1870px;top:78px;width:64px;height:24px;overflow:hidden;text-align:center;white-space:nowrap;line-height:22px;font-size:20px;color:#000;font-weight:bold;text-align:left;padding-left:4px"><span style="font-weight:normal">一</span>.1.1.1</div>
<span class="t" style="left:1902px;top:105.1px;font-size:12px;line-height:16px;color:#555;transform:translateX(-50%);">标题 5</span>
<div class="abs" style="left:1942px;top:78px;width:64px;height:24px;overflow:hidden;text-align:center;white-space:nowrap;line-height:22px;font-size:20px;color:#000;font-weight:bold;text-align:left;padding-left:4px">AaBbC</div>
<span class="t" style="left:1974px;top:105.1px;font-size:12px;line-height:16px;color:#555;transform:translateX(-50%);">标题</span>
<div class="abs" style="left:2014px;top:78px;width:64px;height:24px;overflow:hidden;text-align:center;white-space:nowrap;line-height:22px;font-size:20px;color:#000;font-weight:bold;text-align:left;padding-left:4px">AaBbC</div>
<span class="t" style="left:2046px;top:105.1px;font-size:12px;line-height:16px;color:#555;transform:translateX(-50%);">副标题</span>
<div class="abs" style="left:2086px;top:78px;width:64px;height:24px;overflow:hidden;text-align:center;white-space:nowrap;line-height:22px;font-size:13.5px;color:#44546a;font-style:italic">AaBbCcD</div>
<span class="t" style="left:2118px;top:105.1px;font-size:12px;line-height:16px;color:#555;transform:translateX(-50%);">不明显强调</span>
<div class="abs" style="left:2156px;top:68px;width:24px;height:60px;background:#f3f3f3;border:1px solid #ababab"></div>
<svg style="left:2164px;top:94px" width="8" height="7" viewBox="0 0 8 7"><path d="M0 .5H8" stroke="#444"/><path d="M.5 3H7.5L4 6.8Z" fill="#444"/></svg>
<span class="t" style="left:1727px;top:138.6px;font-size:12px;line-height:16px;color:#444;transform:translateX(-50%);">样式</span>
<svg style="left:2179px;top:143px" width="8" height="8" viewBox="0 0 8 8"><path d="M.5 3V.5H3M.5 .5" fill="none" stroke="#666" stroke-width="1"/><path d="M7.5 2V7.5H2" fill="none" stroke="#666" stroke-width="1"/><path d="M3 3L6.6 6.6M6.8 3.8V6.8H3.8" fill="none" stroke="#666" stroke-width="1"/></svg>
<div class="abs" style="left:2190px;top:66px;width:1px;height:85px;background:#ababab"></div>
<svg style="left:2202px;top:69px" width="14" height="14" viewBox="0 0 14 14"><circle cx="8.7" cy="5.3" r="4.3" fill="none" stroke="#3b6fc0" stroke-width="1.6"/><path d="M5.5 8.5L1 13" stroke="#3b6fc0" stroke-width="2"/></svg>
<span class="t" style="left:2221px;top:69.1px;font-size:12px;line-height:16px;color:#444;">查找</span>
<svg style="left:2260.5px;top:74.5px" width="6" height="4" viewBox="0 0 6 4"><path d="M.5 .5L3.0 3L5.5 .5" fill="none" stroke="#444" stroke-width="1.1"/></svg>
<span class="t" style="left:2202px;top:88.0px;font-size:10px;line-height:14px;color:#8a4fb5;"><span style="color:#555">a</span>b</span>
<span class="t" style="left:2207px;top:96.0px;font-size:10px;line-height:14px;color:#555;">a<span style="color:#3b6fc0">c</span></span>
<svg style="left:2202px;top:100px" width="5" height="6" viewBox="0 0 5 6"><path d="M.5 0V3.5H4.5M3 2L4.6 3.5L3 5" fill="none" stroke="#3b6fc0" stroke-width=".9"/></svg>
<span class="t" style="left:2221px;top:92.1px;font-size:12px;line-height:16px;color:#444;">替换</span>
<svg style="left:2205px;top:115px" width="11" height="15" viewBox="0 0 11 15"><path d="M.7 .7V11.5L3.6 8.8L5.8 13.8L7.8 13L5.6 8H9.3Z" fill="#fff" stroke="#555" stroke-width="1"/></svg>
<span class="t" style="left:2221px;top:115.1px;font-size:12px;line-height:16px;color:#444;">选择</span>
<svg style="left:2249.5px;top:121px" width="6" height="4" viewBox="0 0 6 4"><path d="M.5 .5L3.0 3L5.5 .5" fill="none" stroke="#444" stroke-width="1.1"/></svg>
<span class="t" style="left:2237px;top:138.6px;font-size:12px;line-height:16px;color:#444;transform:translateX(-50%);">编辑</span>
<div class="abs" style="left:2283px;top:66px;width:1px;height:85px;background:#ababab"></div>
<svg style="left:2306px;top:77px" width="12" height="12" viewBox="0 0 12 12"><circle cx="6" cy="6" r="5.5" fill="#ff9519"/></svg>
<span class="t" style="left:2312px;top:102.6px;font-size:12px;line-height:16px;color:#444;transform:translateX(-50%);">加</span>
<span class="t" style="left:2312px;top:117.6px;font-size:12px;line-height:16px;color:#444;transform:translateX(-50%);">载项</span>
<span class="t" style="left:2312px;top:138.6px;font-size:12px;line-height:16px;color:#444;transform:translateX(-50%);">加载项</span>
<div class="abs" style="left:2341px;top:66px;width:1px;height:85px;background:#ababab"></div>
<svg style="left:2362px;top:72px" width="28" height="22" viewBox="0 0 28 22"><circle cx="7" cy="14.5" r="4.9" fill="none" stroke="#35b0f4" stroke-width="3.2"/><circle cx="21" cy="14.5" r="4.9" fill="none" stroke="#2196f3" stroke-width="3.2"/><circle cx="14" cy="7" r="4.6" fill="none" stroke="#35b0f4" stroke-width="3.2"/><path d="M9.6 8.4A4.6 4.6 0 0 0 18.4 8.4" fill="none" stroke="#f0425a" stroke-width="3.2"/></svg>
<span class="t" style="left:2376px;top:102.6px;font-size:12px;line-height:16px;color:#444;transform:translateX(-50%);">保存到</span>
<span class="t" style="left:2376px;top:117.6px;font-size:12px;line-height:16px;color:#444;transform:translateX(-50%);">百度网盘</span>
<span class="t" style="left:2376px;top:138.6px;font-size:12px;line-height:16px;color:#444;transform:translateX(-50%);">保存</span>
<div class="abs" style="left:2410px;top:66px;width:1px;height:85px;background:#ababab"></div>
<svg style="left:2422px;top:147px" width="10" height="6" viewBox="0 0 10 6"><path d="M.5 5.5L5 1L9.5 5.5" fill="none" stroke="#444" stroke-width="1.1"/></svg>
<!-- navigation pane -->
<div class="abs" style="left:521px;top:157px;width:349px;height:859px;background:#e6e6e6"></div>
<div class="abs" style="left:870px;top:158px;width:1px;height:858px;background:#c6c6c6"></div>
<span class="t" style="left:535px;top:170.5px;font-size:21px;line-height:25px;color:#3b3b3b;">导航</span>
<svg style="left:799px;top:176px" width="14" height="8" viewBox="0 0 14 8"><path d="M.5 .5L7 7L13.5 .5" fill="none" stroke="#444" stroke-width="1.1"/></svg>
<svg style="left:842px;top:175px" width="11" height="11" viewBox="0 0 11 11"><path d="M.5 .5L10.5 10.5M10.5 .5L.5 10.5" stroke="#444" stroke-width="1.1"/></svg>
<div class="abs" style="left:535px;top:213px;width:317px;height:26px;background:#fff;border:1px solid #ababab"></div>
<span class="t" style="left:542px;top:217.0px;font-size:12px;line-height:16px;color:#767676;">在文档中搜索</span>
<svg style="left:824px;top:218px" width="14" height="14" viewBox="0 0 14 14"><circle cx="8.6" cy="5.2" r="4" fill="none" stroke="#2b579a" stroke-width="1.7"/><path d="M5.6 8.2L1 12.8" stroke="#2b579a" stroke-width="2.2"/></svg>
<svg style="left:843.0px;top:224.5px" width="5" height="4" viewBox="0 0 5 4"><path d="M.5 .5L2.5 3L4.5 .5" fill="none" stroke="#444" stroke-width="1.1"/></svg>
<span class="t" style="left:536px;top:256.5px;font-size:12px;line-height:16px;color:#2b579a;font-weight:bold">标题</span>
<span class="t" style="left:585px;top:256.5px;font-size:12px;line-height:16px;color:#444;">页面</span>
<span class="t" style="left:634px;top:256.5px;font-size:12px;line-height:16px;color:#444;">结果</span>
<div class="abs" style="left:535px;top:279px;width:26px;height:3px;background:#2b579a"></div>
<div class="abs" style="left:567px;top:790px;width:272px;height:20px;background:#c1d5f2"></div>
<svg style="left:572px;top:292px" width="7" height="7" viewBox="0 0 7 7"><path d="M7 0V7H0Z" fill="#444"/></svg>
<span class="t" style="left:588px;top:288.0px;font-size:12px;line-height:16px;color:#444;">2.4. 安全技术措施</span>
<span class="t" style="left:604px;top:309.0px;font-size:12px;line-height:16px;color:#444;">2.4.1. 企业安全生产组织机构设置</span>
<span class="t" style="left:604px;top:330.0px;font-size:12px;line-height:16px;color:#444;">2.4.2. 安全生产岗位责任制</span>
<span class="t" style="left:604px;top:351.0px;font-size:12px;line-height:16px;color:#444;">2.4.3. 安全生产例会制度</span>
<span class="t" style="left:604px;top:372.0px;font-size:12px;line-height:16px;color:#444;">2.4.4. 安全生产检查制度</span>
<span class="t" style="left:604px;top:393.0px;font-size:12px;line-height:16px;color:#444;">2.4.5. 生产安全事故报告及调查处理制度</span>
<span class="t" style="left:604px;top:414.0px;font-size:12px;line-height:16px;color:#444;">2.4.6. 生产安全事故隐患排查制度</span>
<span class="t" style="left:604px;top:435.0px;font-size:12px;line-height:16px;color:#444;">2.4.7. 安全用电管理制度</span>
<span class="t" style="left:604px;top:456.0px;font-size:12px;line-height:16px;color:#444;">2.4.8. 防火安全“三级”检查制度</span>
<span class="t" style="left:604px;top:477.0px;font-size:12px;line-height:16px;color:#444;">2.4.9. 消防安全工作考评和奖惩制度</span>
<span class="t" style="left:604px;top:498.0px;font-size:12px;line-height:16px;color:#444;">2.4.10. 特种设备安全管理制度</span>
<svg style="left:572px;top:523px" width="7" height="7" viewBox="0 0 7 7"><path d="M7 0V7H0Z" fill="#444"/></svg>
<span class="t" style="left:588px;top:519.0px;font-size:12px;line-height:16px;color:#444;">2.5. 拟投入本项目的设备和设施配套情况表</span>
<span class="t" style="left:604px;top:540.0px;font-size:12px;line-height:16px;color:#444;">2.5.1. 辽L36191</span>
<span class="t" style="left:604px;top:561.0px;font-size:12px;line-height:16px;color:#444;">2.5.2. 辽L36189</span>
<span class="t" style="left:604px;top:582.0px;font-size:12px;line-height:16px;color:#444;">2.5.3. 辽L34468</span>
<span class="t" style="left:604px;top:603.0px;font-size:12px;line-height:16px;color:#444;">2.5.4. 辽L34467</span>
<span class="t" style="left:588px;top:624.0px;font-size:12px;line-height:16px;color:#444;">2.6. 清运单位与接收单位协议</span>
<span class="t" style="left:588px;top:645.0px;font-size:12px;line-height:16px;color:#444;">2.7. 设备操作规程</span>
<span class="t" style="left:572px;top:666.0px;font-size:12px;line-height:16px;color:#444;">3、<span style="padding-left:4.4px"></span>QHSE管理方案</span>
<span class="t" style="left:572px;top:687.0px;font-size:12px;line-height:16px;color:#444;">4、<span style="padding-left:4.4px"></span>质量目标及保证措施</span>
<span class="t" style="left:572px;top:708.0px;font-size:12px;line-height:16px;color:#444;">5、<span style="padding-left:4.4px"></span>服务能力</span>
<span class="t" style="left:572px;top:729.0px;font-size:12px;line-height:16px;color:#444;">6、<span style="padding-left:4.4px"></span>技术服务承诺（主要说明服务质量等）</span>
<svg style="left:540px;top:754px" width="7" height="7" viewBox="0 0 7 7"><path d="M7 0V7H0Z" fill="#444"/></svg>
<span class="t" style="left:556px;top:750.0px;font-size:12px;line-height:16px;color:#444;">五、<span style="padding-left:4.4px"></span>资格审查资料</span>
<span class="t" style="left:572px;top:771.0px;font-size:12px;line-height:16px;color:#444;">1、<span style="padding-left:4.4px"></span>公司概况</span>
<span class="t" style="left:572px;top:792.0px;font-size:12px;line-height:16px;color:#444;">2、<span style="padding-left:4.4px"></span>基本情况表</span>
<svg style="left:556px;top:817px" width="7" height="7" viewBox="0 0 7 7"><path d="M7 0V7H0Z" fill="#444"/></svg>
<span class="t" style="left:572px;top:813.0px;font-size:12px;line-height:16px;color:#444;">3、<span style="padding-left:4.4px"></span>响应人资格条件</span>
<span class="t" style="left:588px;top:834.0px;font-size:12px;line-height:16px;color:#444;">3.1. 辽河油田公司承包（服务）商资源库内...</span>
<svg style="left:572px;top:859px" width="7" height="7" viewBox="0 0 7 7"><path d="M7 0V7H0Z" fill="#444"/></svg>
<span class="t" style="left:588px;top:855.0px;font-size:12px;line-height:16px;color:#444;">3.2. 公用条款</span>
<span class="t" style="left:604px;top:876.0px;font-size:12px;line-height:16px;color:#444;">3.2.1. 没有处于被责令停业，谈判资格被...</span>
<span class="t" style="left:604px;top:897.0px;font-size:12px;line-height:16px;color:#444;">3.2.2. 单位负责人为同一人或者控股、管...</span>
<span class="t" style="left:604px;top:918.0px;font-size:12px;line-height:16px;color:#444;">3.2.3. 在最近三年内没有骗取中标（成交...</span>
<span class="t" style="left:604px;top:939.0px;font-size:12px;line-height:16px;color:#444;">3.2.4. 响应人须承诺“近三年无违法、无亡...</span>
<span class="t" style="left:604px;top:960.0px;font-size:12px;line-height:16px;color:#444;">3.2.5. 合规承诺书</span>
<svg style="left:572px;top:985px" width="7" height="7" viewBox="0 0 7 7"><path d="M7 0V7H0Z" fill="#444"/></svg>
<span class="t" style="left:588px;top:981.0px;font-size:12px;line-height:16px;color:#444;">3.3. 商务资格条件</span>
<div class="abs" style="left:871px;top:157px;width:29px;height:27px;background:#dedede"></div>
<div class="abs" style="left:875px;top:161px;width:21px;height:19px;background:#fdfdfd"></div>
<svg style="left:882px;top:169px" width="6" height="6" viewBox="0 0 6 6"><path d="M.8 0V4.7H6" fill="none" stroke="#555" stroke-width="1.6"/></svg>
<div class="abs" style="left:876px;top:290px;width:17px;height:69px;background:#c6c6c6"></div>
<div class="abs" style="left:876px;top:359px;width:17px;height:657px;background:#fff"></div>
<span class="t" style="left:884.5px;top:301.5px;font-size:10px;line-height:10px;color:#555;transform:translate(-50%,-50%) rotate(-90deg)">4</span>
<span class="t" style="left:884.5px;top:330.0px;font-size:10px;line-height:10px;color:#555;transform:translate(-50%,-50%) rotate(-90deg)">2</span>
<span class="t" style="left:884.5px;top:387.7px;font-size:10px;line-height:10px;color:#555;transform:translate(-50%,-50%) rotate(-90deg)">2</span>
<span class="t" style="left:884.5px;top:416.4px;font-size:10px;line-height:10px;color:#555;transform:translate(-50%,-50%) rotate(-90deg)">4</span>
<span class="t" style="left:884.5px;top:445.1px;font-size:10px;line-height:10px;color:#555;transform:translate(-50%,-50%) rotate(-90deg)">6</span>
<span class="t" style="left:884.5px;top:473.8px;font-size:10px;line-height:10px;color:#555;transform:translate(-50%,-50%) rotate(-90deg)">8</span>
<span class="t" style="left:884.5px;top:502.5px;font-size:10px;line-height:10px;color:#555;transform:translate(-50%,-50%) rotate(-90deg)">10</span>
<span class="t" style="left:884.5px;top:531.2px;font-size:10px;line-height:10px;color:#555;transform:translate(-50%,-50%) rotate(-90deg)">12</span>
<span class="t" style="left:884.5px;top:559.9px;font-size:10px;line-height:10px;color:#555;transform:translate(-50%,-50%) rotate(-90deg)">14</span>
<span class="t" style="left:884.5px;top:588.6px;font-size:10px;line-height:10px;color:#555;transform:translate(-50%,-50%) rotate(-90deg)">16</span>
<span class="t" style="left:884.5px;top:617.3px;font-size:10px;line-height:10px;color:#555;transform:translate(-50%,-50%) rotate(-90deg)">18</span>
<span class="t" style="left:884.5px;top:646.0px;font-size:10px;line-height:10px;color:#555;transform:translate(-50%,-50%) rotate(-90deg)">20</span>
<span class="t" style="left:884.5px;top:674.7px;font-size:10px;line-height:10px;color:#555;transform:translate(-50%,-50%) rotate(-90deg)">22</span>
<span class="t" style="left:884.5px;top:703.4px;font-size:10px;line-height:10px;color:#555;transform:translate(-50%,-50%) rotate(-90deg)">24</span>
<span class="t" style="left:884.5px;top:732.1px;font-size:10px;line-height:10px;color:#555;transform:translate(-50%,-50%) rotate(-90deg)">26</span>
<span class="t" style="left:884.5px;top:760.8px;font-size:10px;line-height:10px;color:#555;transform:translate(-50%,-50%) rotate(-90deg)">28</span>
<span class="t" style="left:884.5px;top:789.5px;font-size:10px;line-height:10px;color:#555;transform:translate(-50%,-50%) rotate(-90deg)">30</span>
<span class="t" style="left:884.5px;top:818.2px;font-size:10px;line-height:10px;color:#555;transform:translate(-50%,-50%) rotate(-90deg)">32</span>
<span class="t" style="left:884.5px;top:846.9px;font-size:10px;line-height:10px;color:#555;transform:translate(-50%,-50%) rotate(-90deg)">34</span>
<span class="t" style="left:884.5px;top:875.6px;font-size:10px;line-height:10px;color:#555;transform:translate(-50%,-50%) rotate(-90deg)">36</span>
<span class="t" style="left:884.5px;top:904.3px;font-size:10px;line-height:10px;color:#555;transform:translate(-50%,-50%) rotate(-90deg)">38</span>
<span class="t" style="left:884.5px;top:933.0px;font-size:10px;line-height:10px;color:#555;transform:translate(-50%,-50%) rotate(-90deg)">40</span>
<span class="t" style="left:884.5px;top:961.7px;font-size:10px;line-height:10px;color:#555;transform:translate(-50%,-50%) rotate(-90deg)">42</span>
<span class="t" style="left:884.5px;top:990.4px;font-size:10px;line-height:10px;color:#555;transform:translate(-50%,-50%) rotate(-90deg)">44</span>
<span class="t" style="left:884.5px;top:1019.1px;font-size:10px;line-height:10px;color:#555;transform:translate(-50%,-50%) rotate(-90deg)">46</span>
<!-- horizontal ruler -->
<div class="abs" style="left:943px;top:162px;width:100px;height:16px;background:#c6c6c6"></div>
<div class="abs" style="left:1043px;top:162px;width:559px;height:16px;background:#fff"></div>
<div class="abs" style="left:1602px;top:162px;width:53px;height:16px;background:#c6c6c6"></div>
<span class="t" style="left:944.0px;top:164.6px;font-size:9.6px;line-height:13.6px;color:#555;transform:translateX(-50%);">8</span>
<span class="t" style="left:969.1px;top:164.6px;font-size:9.6px;line-height:13.6px;color:#555;transform:translateX(-50%);">6</span>
<span class="t" style="left:994.1px;top:164.6px;font-size:9.6px;line-height:13.6px;color:#555;transform:translateX(-50%);">4</span>
<span class="t" style="left:1019.2px;top:164.6px;font-size:9.6px;line-height:13.6px;color:#555;transform:translateX(-50%);">2</span>
<span class="t" style="left:1069.4px;top:164.6px;font-size:9.6px;line-height:13.6px;color:#555;transform:translateX(-50%);">2</span>
<span class="t" style="left:1094.5px;top:164.6px;font-size:9.6px;line-height:13.6px;color:#555;transform:translateX(-50%);">4</span>
<span class="t" style="left:1119.5px;top:164.6px;font-size:9.6px;line-height:13.6px;color:#555;transform:translateX(-50%);">6</span>
<span class="t" style="left:1144.6px;top:164.6px;font-size:9.6px;line-height:13.6px;color:#555;transform:translateX(-50%);">8</span>
<span class="t" style="left:1169.7px;top:164.6px;font-size:9.6px;line-height:13.6px;color:#555;transform:translateX(-50%);">10</span>
<span class="t" style="left:1194.8px;top:164.6px;font-size:9.6px;line-height:13.6px;color:#555;transform:translateX(-50%);">12</span>
<span class="t" style="left:1219.9px;top:164.6px;font-size:9.6px;line-height:13.6px;color:#555;transform:translateX(-50%);">14</span>
<span class="t" style="left:1244.9px;top:164.6px;font-size:9.6px;line-height:13.6px;color:#555;transform:translateX(-50%);">16</span>
<span class="t" style="left:1270.0px;top:164.6px;font-size:9.6px;line-height:13.6px;color:#555;transform:translateX(-50%);">18</span>
<span class="t" style="left:1295.1px;top:164.6px;font-size:9.6px;line-height:13.6px;color:#555;transform:translateX(-50%);">20</span>
<span class="t" style="left:1320.2px;top:164.6px;font-size:9.6px;line-height:13.6px;color:#555;transform:translateX(-50%);">22</span>
<span class="t" style="left:1345.3px;top:164.6px;font-size:9.6px;line-height:13.6px;color:#555;transform:translateX(-50%);">24</span>
<span class="t" style="left:1370.3px;top:164.6px;font-size:9.6px;line-height:13.6px;color:#555;transform:translateX(-50%);">26</span>
<span class="t" style="left:1395.4px;top:164.6px;font-size:9.6px;line-height:13.6px;color:#555;transform:translateX(-50%);">28</span>
<span class="t" style="left:1420.5px;top:164.6px;font-size:9.6px;line-height:13.6px;color:#555;transform:translateX(-50%);">30</span>
<span class="t" style="left:1445.6px;top:164.6px;font-size:9.6px;line-height:13.6px;color:#555;transform:translateX(-50%);">32</span>
<span class="t" style="left:1470.7px;top:164.6px;font-size:9.6px;line-height:13.6px;color:#555;transform:translateX(-50%);">34</span>
<span class="t" style="left:1495.7px;top:164.6px;font-size:9.6px;line-height:13.6px;color:#555;transform:translateX(-50%);">36</span>
<span class="t" style="left:1520.8px;top:164.6px;font-size:9.6px;line-height:13.6px;color:#555;transform:translateX(-50%);">38</span>
<span class="t" style="left:1545.9px;top:164.6px;font-size:9.6px;line-height:13.6px;color:#555;transform:translateX(-50%);">40</span>
<span class="t" style="left:1571.0px;top:164.6px;font-size:9.6px;line-height:13.6px;color:#555;transform:translateX(-50%);">42</span>
<span class="t" style="left:1596.1px;top:164.6px;font-size:9.6px;line-height:13.6px;color:#555;transform:translateX(-50%);">44</span>
<span class="t" style="left:1621.1px;top:164.6px;font-size:9.6px;line-height:13.6px;color:#555;transform:translateX(-50%);">46</span>
<span class="t" style="left:1646.2px;top:164.6px;font-size:9.6px;line-height:13.6px;color:#555;transform:translateX(-50%);">48</span>
<svg style="left:1039px;top:159px" width="11" height="28" viewBox="0 0 11 28"><path d="M.5 .5H10.5V3.5L5.5 8.5L.5 3.5Z" fill="#fff" stroke="#8a8a8a"/><path d="M5.5 12L10.5 17V20.5H.5V17Z" fill="#fff" stroke="#8a8a8a"/><rect x=".5" y="20.5" width="10" height="7" fill="#fff" stroke="#8a8a8a"/></svg>
<svg style="left:1596px;top:167px" width="11" height="12" viewBox="0 0 11 12"><path d="M5.5 2.5L10.5 7.5V11.5H.5V7.5Z" fill="#fff" stroke="#8a8a8a"/></svg>
<!-- left column pages -->
<div class="abs" style="left:944px;top:187px;width:711px;height:91px;background:#fff;border:1px solid #c8c8c8;border-top:none"></div>
<div class="abs" style="left:1040px;top:187px;width:420px;height:7px;overflow:hidden"><span class="t" style="left:7px;top:-10px;font-size:12.6px;line-height:16px;color:#000;font-family:Liberation Sans,Noto Serif CJK SC,serif;font-weight:500;">物清洁服务，欢喜岭地区公建物业服务，厨房油烟清洗服务等。<span class="pm" style="font-size:10px">↵</span></span></div>
<div class="abs" style="left:1025px;top:210px;width:21px;height:21px;border-top:1px solid #a6a6a6;border-right:1px solid #a6a6a6"></div>
<div class="abs" style="left:1604px;top:210px;width:21px;height:21px;border-top:1px solid #a6a6a6;border-left:1px solid #a6a6a6"></div>
<span class="t" style="left:1328px;top:223.1px;font-size:10.8px;line-height:14.8px;color:#7f7f7f;transform:translateX(-50%);">61<span class="pm" style="font-size:9px">↵</span></span>
<div class="abs" style="left:944px;top:291px;width:711px;height:760px;background:#fff;border:1px solid #c8c8c8"></div>
<div class="abs" style="left:1025px;top:337px;width:21px;height:21px;border-bottom:1px solid #a6a6a6;border-right:1px solid #a6a6a6"></div>
<div class="abs" style="left:1604px;top:337px;width:21px;height:21px;border-bottom:1px solid #a6a6a6;border-left:1px solid #a6a6a6"></div>
<span class="t" style="left:1328.5px;top:332.6px;font-size:10.8px;line-height:14.8px;color:#8a8a8a;transform:translateX(-50%);">盘锦九鼎实业有限责任公司-投标文件<span class="pm" style="font-size:9px">↵</span></span>
<div class="abs" style="left:1037.5px;top:374px;width:4px;height:4px;background:#000"></div>
<span class="t" style="left:1046px;top:360.5px;font-size:17px;line-height:21px;color:#000;font-weight:bold">2、</span>
<span class="t" style="left:1081px;top:360.0px;font-size:18px;line-height:22px;color:#000;font-family:Liberation Serif,Noto Serif CJK SC,serif;font-weight:bold;"><span class="wavy">基本情况表</span><span class="pm" style="font-size:15px">↵</span></span>
<span class="t" style="left:1283.5px;top:394.0px;font-size:17px;line-height:21px;color:#000;font-family:Liberation Serif,Noto Serif CJK SC,serif;font-weight:bold;"><span class="wavy">基本情况表</span><span class="pm" style="font-size:15px">↵</span></span>
<div class="abs" style="left:1032px;top:426px;width:585px;height:1px;background:#000"></div>
<div class="abs" style="left:1032px;top:459px;width:585px;height:1px;background:#000"></div>
<div class="abs" style="left:1032px;top:495px;width:585px;height:1px;background:#000"></div>
<div class="abs" style="left:1032px;top:530px;width:585px;height:1px;background:#000"></div>
<div class="abs" style="left:1032px;top:565px;width:585px;height:1px;background:#000"></div>
<div class="abs" style="left:1032px;top:603px;width:585px;height:1px;background:#000"></div>
<div class="abs" style="left:1179px;top:645px;width:438px;height:1px;background:#000"></div>
<div class="abs" style="left:1032px;top:685px;width:585px;height:1px;background:#000"></div>
<div class="abs" style="left:1032px;top:725px;width:585px;height:1px;background:#000"></div>
<div class="abs" style="left:1032px;top:793px;width:585px;height:1px;background:#000"></div>
<div class="abs" style="left:1032px;top:426px;width:1px;height:640px;background:#000"></div>
<div class="abs" style="left:1616px;top:426px;width:1px;height:640px;background:#000"></div>
<div class="abs" style="left:1179px;top:426px;width:1px;height:640px;background:#000"></div>
<div class="abs" style="left:1243px;top:603px;width:1px;height:122px;background:#000"></div>
<div class="abs" style="left:1369px;top:459px;width:1px;height:266px;background:#000"></div>
<div class="abs" style="left:1439px;top:459px;width:1px;height:266px;background:#000"></div>
<span class="t" style="left:1076px;top:433.0px;font-size:13px;line-height:17px;color:#000;font-family:Liberation Sans,Noto Serif CJK SC,serif;font-weight:500;letter-spacing:-.4px;"><span class="wavy">响应人名称</span><span class="pm" style="font-size:12px">↵</span></span>
<span class="t" style="left:1323.5px;top:433.0px;font-size:13px;line-height:17px;color:#000;font-family:Liberation Sans,Noto Serif CJK SC,serif;font-weight:500;letter-spacing:-.4px;">盘锦九鼎实业有限责任公司<span class="pm" style="font-size:12px">↵</span></span>
<span class="t" style="left:1081.5px;top:468.0px;font-size:13px;line-height:17px;color:#000;font-family:Liberation Sans,Noto Serif CJK SC,serif;font-weight:500;letter-spacing:-.4px;"><span class="wavy">注册资金</span><span class="pm" style="font-size:12px">↵</span></span>
<span class="t" style="left:1250px;top:468.0px;font-size:13px;line-height:17px;color:#000;font-family:Liberation Sans,Noto Serif CJK SC,serif;font-weight:500;letter-spacing:-.4px;">叁仟<span class="wavy">万元</span><span class="pm" style="font-size:12px">↵</span></span>
<span class="t" style="left:1380.5px;top:468.0px;font-size:13px;line-height:17px;color:#000;font-family:Liberation Sans,Noto Serif CJK SC,serif;font-weight:500;letter-spacing:-.4px;"><span class="wavy">成立时间</span><span class="pm" style="font-size:12px">↵</span></span>
<span class="t" style="left:1480.5px;top:468.0px;font-size:13px;line-height:17px;color:#000;font-family:Liberation Sans,Noto Serif CJK SC,serif;font-weight:500;letter-spacing:-.4px;"><span style="font-size:11.5px;font-weight:400">2007</span> 年 <span style="font-size:11.5px;font-weight:400">6</span> 月 <span style="font-size:11.5px;font-weight:400">22</span> 日<span class="pm" style="font-size:12px">↵</span></span>
<span class="t" style="left:1081.5px;top:503.5px;font-size:13px;line-height:17px;color:#000;font-family:Liberation Sans,Noto Serif CJK SC,serif;font-weight:500;letter-spacing:-.4px;"><span class="wavy">注册地址</span><span class="pm" style="font-size:12px">↵</span></span>
<span class="t" style="left:1193.5px;top:503.5px;font-size:13px;line-height:17px;color:#000;font-family:Liberation Sans,Noto Serif CJK SC,serif;font-weight:500;letter-spacing:-.4px;">辽河三角洲高新技术工业园区<span class="pm" style="font-size:12px">↵</span></span>
<span class="t" style="left:1380.5px;top:503.5px;font-size:13px;line-height:17px;color:#000;font-family:Liberation Sans,Noto Serif CJK SC,serif;font-weight:500;letter-spacing:-.4px;"><span class="wavy">员工总数</span><span class="pm" style="font-size:12px">↵</span></span>
<span class="t" style="left:1519px;top:504.0px;font-size:12px;line-height:16px;color:#000;font-family:Liberation Sans,Noto Serif CJK SC,serif;font-weight:500;font-weight:400;">300<span class="pm" style="font-size:12px">↵</span></span>
<span class="t" style="left:1081.5px;top:538.0px;font-size:13px;line-height:17px;color:#000;font-family:Liberation Sans,Noto Serif CJK SC,serif;font-weight:500;letter-spacing:-.4px;"><span class="wavy">开户银行</span><span class="pm" style="font-size:12px">↵</span></span>
<span class="t" style="left:1224px;top:538.0px;font-size:13px;line-height:17px;color:#000;font-family:Liberation Sans,Noto Serif CJK SC,serif;font-weight:500;letter-spacing:-.4px;"><span class="wavy">盘锦银行辽油支行</span><span class="pm" style="font-size:12px">↵</span></span>
<span class="t" style="left:1392px;top:538.0px;font-size:13px;line-height:17px;color:#000;font-family:Liberation Sans,Noto Serif CJK SC,serif;font-weight:500;letter-spacing:-.4px;"><span class="wavy">账号</span><span class="pm" style="font-size:12px">↵</span></span>
<span class="t" style="left:1476px;top:538.9px;font-size:11.2px;line-height:15.2px;color:#000;font-family:Liberation Sans,Noto Serif CJK SC,serif;font-weight:500;font-weight:400;">08400012002000473<span class="pm" style="font-size:12px">↵</span></span>
<span class="t" style="left:1081.5px;top:575.0px;font-size:13px;line-height:17px;color:#000;font-family:Liberation Sans,Noto Serif CJK SC,serif;font-weight:500;letter-spacing:-.4px;"><span class="wavy">邮政编码</span><span class="pm" style="font-size:12px">↵</span></span>
<span class="t" style="left:1254.5px;top:575.5px;font-size:12px;line-height:16px;color:#000;font-family:Liberation Sans,Noto Serif CJK SC,serif;font-weight:500;font-weight:400;">124010<span class="pm" style="font-size:12px">↵</span></span>
<span class="t" style="left:1380.5px;top:575.0px;font-size:13px;line-height:17px;color:#000;font-family:Liberation Sans,Noto Serif CJK SC,serif;font-weight:500;letter-spacing:-.4px;"><span class="wavy">员工总数</span><span class="pm" style="font-size:12px">↵</span></span>
<span class="t" style="left:1519px;top:575.5px;font-size:12px;line-height:16px;color:#000;font-family:Liberation Sans,Noto Serif CJK SC,serif;font-weight:500;font-weight:400;">300<span class="pm" style="font-size:12px">↵</span></span>
<span class="t" style="left:1081.5px;top:635.0px;font-size:13px;line-height:17px;color:#000;font-family:Liberation Sans,Noto Serif CJK SC,serif;font-weight:500;letter-spacing:-.4px;"><span class="wavy">联系方式</span><span class="pm" style="font-size:12px">↵</span></span>
<span class="t" style="left:1193.5px;top:615.5px;font-size:13px;line-height:17px;color:#000;font-family:Liberation Sans,Noto Serif CJK SC,serif;font-weight:500;letter-spacing:-.4px;"><span class="wavy">联系人</span><span class="pm" style="font-size:12px">↵</span></span>
<span class="t" style="left:1289.5px;top:615.5px;font-size:13px;line-height:17px;color:#000;font-family:Liberation Sans,Noto Serif CJK SC,serif;font-weight:500;letter-spacing:-.4px;">桑晓微<span class="pm" style="font-size:12px">↵</span></span>
<span class="t" style="left:1392px;top:615.5px;font-size:13px;line-height:17px;color:#000;font-family:Liberation Sans,Noto Serif CJK SC,serif;font-weight:500;letter-spacing:-.4px;"><span class="wavy">电话</span><span class="pm" style="font-size:12px">↵</span></span>
<span class="t" style="left:1495.5px;top:616.4px;font-size:11.2px;line-height:15.2px;color:#000;font-family:Liberation Sans,Noto Serif CJK SC,serif;font-weight:500;font-weight:400;">15942799739<span class="pm" style="font-size:12px">↵</span></span>
<span class="t" style="left:1199px;top:655.5px;font-size:13px;line-height:17px;color:#000;font-family:Liberation Sans,Noto Serif CJK SC,serif;font-weight:500;letter-spacing:-.4px;"><span class="wavy">网址</span><span class="pm" style="font-size:12px">↵</span></span>
<span class="t" style="left:1305.5px;top:656.0px;font-size:12px;line-height:16px;color:#000;font-family:Liberation Sans,Noto Serif CJK SC,serif;font-weight:500;font-weight:400;">/<span class="pm" style="font-size:12px">↵</span></span>
<span class="t" style="left:1392px;top:655.5px;font-size:13px;line-height:17px;color:#000;font-family:Liberation Sans,Noto Serif CJK SC,serif;font-weight:500;letter-spacing:-.4px;"><span class="wavy">传真</span><span class="pm" style="font-size:12px">↵</span></span>
<span class="t" style="left:1528px;top:656.0px;font-size:12px;line-height:16px;color:#000;font-family:Liberation Sans,Noto Serif CJK SC,serif;font-weight:500;font-weight:400;">/<span class="pm" style="font-size:12px">↵</span></span>
<span class="t" style="left:1077px;top:686.0px;font-size:13px;line-height:17px;color:#000;font-family:Liberation Sans,Noto Serif CJK SC,serif;font-weight:500;letter-spacing:-.4px;">法定代表人<span class="pm" style="font-size:12px">↵</span></span>
<span class="t" style="left:1067.5px;top:705.5px;font-size:13px;line-height:17px;color:#000;font-family:Liberation Sans,Noto Serif CJK SC,serif;font-weight:500;letter-spacing:-.4px;">（单位负责人）<span class="pm" style="font-size:12px">↵</span></span>
<span class="t" style="left:1199px;top:696.0px;font-size:13px;line-height:17px;color:#000;font-family:Liberation Sans,Noto Serif CJK SC,serif;font-weight:500;letter-spacing:-.4px;"><span class="wavy">姓名</span><span class="pm" style="font-size:12px">↵</span></span>
<span class="t" style="left:1289.5px;top:696.0px;font-size:13px;line-height:17px;color:#000;font-family:Liberation Sans,Noto Serif CJK SC,serif;font-weight:500;letter-spacing:-.4px;"><span class="wavy">马占军</span><span class="pm" style="font-size:12px">↵</span></span>
<span class="t" style="left:1392px;top:696.0px;font-size:13px;line-height:17px;color:#000;font-family:Liberation Sans,Noto Serif CJK SC,serif;font-weight:500;letter-spacing:-.4px;"><span class="wavy">电话</span><span class="pm" style="font-size:12px">↵</span></span>
<span class="t" style="left:1495.5px;top:696.9px;font-size:11.2px;line-height:15.2px;color:#000;font-family:Liberation Sans,Noto Serif CJK SC,serif;font-weight:500;font-weight:400;">15842705551<span class="pm" style="font-size:12px">↵</span></span>
<span class="t" style="left:1044.5px;top:740.0px;font-size:13px;line-height:17px;color:#000;font-family:Liberation Sans,Noto Serif CJK SC,serif;font-weight:500;letter-spacing:-.4px">响应人需具有的各类资</span>
<span class="t" style="left:1089px;top:759.5px;font-size:13px;line-height:17px;color:#000;font-family:Liberation Sans,Noto Serif CJK SC,serif;font-weight:500;letter-spacing:-.4px;">质证书<span class="pm" style="font-size:12px">↵</span></span>
<span class="t" style="left:1187px;top:749.5px;font-size:13px;line-height:17px;color:#000;font-family:Liberation Sans,Noto Serif CJK SC,serif;font-weight:500;letter-spacing:-.4px;">框架中标通知书<span class="pm" style="font-size:12px">↵</span></span>
<span class="t" style="left:1069px;top:911.0px;font-size:13px;line-height:17px;color:#000;font-family:Liberation Sans,Noto Serif CJK SC,serif;font-weight:500;letter-spacing:-.4px;"><span class="wavy">经营范围备注</span><span class="pm" style="font-size:12px">↵</span></span>
<span class="t" style="left:1617px;top:426.0px;font-size:12px;line-height:16px;color:#8c8c8c;"><span class="pm" style="font-size:12px">↵</span></span>
<span class="t" style="left:1617px;top:459.0px;font-size:12px;line-height:16px;color:#8c8c8c;"><span class="pm" style="font-size:12px">↵</span></span>
<span class="t" style="left:1617px;top:495.0px;font-size:12px;line-height:16px;color:#8c8c8c;"><span class="pm" style="font-size:12px">↵</span></span>
<span class="t" style="left:1617px;top:530.0px;font-size:12px;line-height:16px;color:#8c8c8c;"><span class="pm" style="font-size:12px">↵</span></span>
<span class="t" style="left:1617px;top:565.0px;font-size:12px;line-height:16px;color:#8c8c8c;"><span class="pm" style="font-size:12px">↵</span></span>
<span class="t" style="left:1617px;top:603.0px;font-size:12px;line-height:16px;color:#8c8c8c;"><span class="pm" style="font-size:12px">↵</span></span>
<span class="t" style="left:1617px;top:645.0px;font-size:12px;line-height:16px;color:#8c8c8c;"><span class="pm" style="font-size:12px">↵</span></span>
<span class="t" style="left:1617px;top:685.5px;font-size:12px;line-height:16px;color:#8c8c8c;"><span class="pm" style="font-size:12px">↵</span></span>
<span class="t" style="left:1617px;top:725.0px;font-size:12px;line-height:16px;color:#8c8c8c;"><span class="pm" style="font-size:12px">↵</span></span>
<span class="t" style="left:1617px;top:793.0px;font-size:12px;line-height:16px;color:#8c8c8c;"><span class="pm" style="font-size:12px">↵</span></span>
<div class="abs" style="left:1256px;top:609px;width:366px;height:40px;border:3.5px solid #c8102e"></div>
<span class="t" style="left:1205.3px;top:793.7px;font-size:13px;line-height:17px;color:#000;font-family:Liberation Sans,Noto Serif CJK SC,serif;font-weight:500;letter-spacing:-0.413px">公司主要经营项目：城市生活垃圾经营性服务，城市建筑垃圾处置（清</span>
<span class="t" style="left:1191.8px;top:813.2px;font-size:13px;line-height:17px;color:#000;font-family:Liberation Sans,Noto Serif CJK SC,serif;font-weight:500;letter-spacing:-0.473px">运），餐饮服务，建筑劳务分包；物业管理，会议及展览服务，餐饮管理，</span>
<span class="t" style="left:1191.8px;top:832.7px;font-size:13px;line-height:17px;color:#000;font-family:Liberation Sans,Noto Serif CJK SC,serif;font-weight:500;letter-spacing:-0.473px">咨询策划服务，专业保洁、清洗、消毒服务，花卉绿植租借与代管理，建筑</span>
<span class="t" style="left:1191.8px;top:852.3px;font-size:13px;line-height:17px;color:#000;font-family:Liberation Sans,Noto Serif CJK SC,serif;font-weight:500;letter-spacing:-0.473px">物清洁服务，住房租赁，非居住房地产租赁，家用电器安装服务，普通机械</span>
<span class="t" style="left:1191.8px;top:871.8px;font-size:13px;line-height:17px;color:#000;font-family:Liberation Sans,Noto Serif CJK SC,serif;font-weight:500;letter-spacing:-0.473px">设备安装服务，劳务服务；网络技术服务，软件开发，广告制作，礼品花卉</span>
<span class="t" style="left:1191.8px;top:891.3px;font-size:13px;line-height:17px;color:#000;font-family:Liberation Sans,Noto Serif CJK SC,serif;font-weight:500;letter-spacing:-0.473px">销售，气体、液体分离及纯净设备销售。同时还进行门窗制造加工，建筑材</span>
<span class="t" style="left:1191.8px;top:910.8px;font-size:13px;line-height:17px;color:#000;font-family:Liberation Sans,Noto Serif CJK SC,serif;font-weight:500;letter-spacing:-0.473px">料销售，五金产品批发，建筑装饰材料销售，机械设备销售，化工产品销售</span>
<span class="t" style="left:1191.8px;top:930.3px;font-size:13px;line-height:17px;color:#000;font-family:Liberation Sans,Noto Serif CJK SC,serif;font-weight:500;letter-spacing:-0.473px">（不含许可类化工产品），电子产品销售，电气机械设备销售，仪器仪表销</span>
<span class="t" style="left:1198.6px;top:949.9px;font-size:13px;line-height:17px;color:#000;font-family:Liberation Sans,Noto Serif CJK SC,serif;font-weight:500;letter-spacing:-0.487px">售，通信设备销售，石油钻采专用设备销售，橡胶制品销售，塑料制品销</span>
<span class="t" style="left:1191.8px;top:969.4px;font-size:13px;line-height:17px;color:#000;font-family:Liberation Sans,Noto Serif CJK SC,serif;font-weight:500;letter-spacing:-0.473px">售，日用百货销售，体育用品及器材批发，办公用品销售，日用杂品销售，</span>
<span class="t" style="left:1191.8px;top:988.9px;font-size:13px;line-height:17px;color:#000;font-family:Liberation Sans,Noto Serif CJK SC,serif;font-weight:500;letter-spacing:-0.473px">家用电器销售，润滑油销售，机械设备租赁，装卸搬运，农业专业及辅助性</span>
<span class="t" style="left:1191.8px;top:1008.4px;font-size:13px;line-height:17px;color:#000;font-family:Liberation Sans,Noto Serif CJK SC,serif;font-weight:500;letter-spacing:-0.473px">活动，农业机械服务，农业园艺服务，农作物收割服务，农作物病虫害防治</span>
<!-- right column pages -->
<div class="abs" style="left:1670px;top:187px;width:711px;height:91px;background:#fff;border:1px solid #c8c8c8;border-top:none"></div>
<div class="abs" style="left:1751px;top:210px;width:21px;height:21px;border-top:1px solid #a6a6a6;border-right:1px solid #a6a6a6"></div>
<div class="abs" style="left:2330px;top:210px;width:21px;height:21px;border-top:1px solid #a6a6a6;border-left:1px solid #a6a6a6"></div>
<span class="t" style="left:2054.5px;top:223.1px;font-size:10.8px;line-height:14.8px;color:#7f7f7f;transform:translateX(-50%);">62<span class="pm" style="font-size:9px">↵</span></span>
<div class="abs" style="left:1670px;top:291px;width:711px;height:760px;background:#fff;border:1px solid #c8c8c8"></div>
<div class="abs" style="left:1751px;top:337px;width:21px;height:21px;border-bottom:1px solid #a6a6a6;border-right:1px solid #a6a6a6"></div>
<div class="abs" style="left:2330px;top:337px;width:21px;height:21px;border-bottom:1px solid #a6a6a6;border-left:1px solid #a6a6a6"></div>
<span class="t" style="left:2054.5px;top:333.1px;font-size:10.8px;line-height:14.8px;color:#8a8a8a;transform:translateX(-50%);">盘锦九鼎实业有限责任公司-投标文件<span class="pm" style="font-size:9px">↵</span></span>
<div class="abs" style="left:1763.5px;top:374px;width:4px;height:4px;background:#000"></div>
<span class="t" style="left:1772px;top:360.0px;font-size:17px;line-height:21px;color:#000;font-weight:bold">3、</span>
<span class="t" style="left:1807px;top:359.5px;font-size:18px;line-height:22px;color:#000;font-family:Liberation Serif,Noto Serif CJK SC,serif;font-weight:bold;"><span class="wavy">响应人资格条件</span><span class="pm" style="font-size:15px">↵</span></span>
<div class="abs" style="left:1763.5px;top:411px;width:4px;height:4px;background:#000"></div>
<span class="t" style="left:1772px;top:395.8px;font-size:18.5px;line-height:22.5px;color:#000;font-weight:bold">3.1.</span>
<span class="t" style="left:1816px;top:395.4px;font-size:19.2px;line-height:23.2px;color:#000;font-family:Liberation Serif,Noto Serif CJK SC,serif;font-weight:bold;">辽河油田公司承包（服务）商资源库内该项目准入的有效承</span>
<span class="t" style="left:1816px;top:432.4px;font-size:19.2px;line-height:23.2px;color:#000;font-family:Liberation Serif,Noto Serif CJK SC,serif;font-weight:bold;">包（服务商）截图<span class="pm" style="font-size:16px">↵</span></span>
<span class="t" style="left:1768px;top:467.0px;font-size:12px;line-height:16px;color:#8c8c8c;"><span class="pm" style="font-size:12px">↵</span></span>
<div class="abs" style="left:1772px;top:490px;width:2px;height:367px;background:#5a5a5a"></div>
<span class="t" style="left:1789px;top:503.7px;font-size:13.55px;line-height:17.55px;color:#303133;">工业固废清理、生活垃圾清理公开量化评审结果公示</span>
<span class="t" style="left:1796px;top:567.5px;font-size:9px;line-height:13px;color:#8d9095;font-weight:bold">排名</span>
<span class="t" style="left:1871.5px;top:567.5px;font-size:9px;line-height:13px;color:#8d9095;font-weight:bold">承包商名称</span>
<span class="t" style="left:2098.5px;top:567.5px;font-size:9px;line-height:13px;color:#8d9095;font-weight:bold">评审结果</span>
<span class="t" style="left:2174px;top:567.5px;font-size:9px;line-height:13px;color:#8d9095;font-weight:bold">备注</span>
<div class="abs" style="left:1789px;top:614px;width:542px;height:27px;background:#f5f7fa"></div>
<div class="abs" style="left:1789px;top:586px;width:542px;height:1px;background:#ebeef5"></div>
<span class="t" style="left:1796px;top:595.3px;font-size:9.8px;line-height:13.8px;color:#606266;">1</span>
<span class="t" style="left:1871.5px;top:595.7px;font-size:9px;line-height:13px;color:#606266;">辽宁百顺源环保科技有限公司</span>
<span class="t" style="left:2098.5px;top:595.7px;font-size:9px;line-height:13px;color:#606266;">入围</span>
<div class="abs" style="left:1789px;top:614px;width:542px;height:1px;background:#ebeef5"></div>
<span class="t" style="left:1796px;top:622.5px;font-size:9.8px;line-height:13.8px;color:#606266;">2</span>
<span class="t" style="left:1871.5px;top:622.9px;font-size:9px;line-height:13px;color:#606266;">盘锦九鼎实业有限责任公司</span>
<span class="t" style="left:2098.5px;top:622.9px;font-size:9px;line-height:13px;color:#606266;">入围</span>
<div class="abs" style="left:1789px;top:641px;width:542px;height:1px;background:#ebeef5"></div>
<span class="t" style="left:1796px;top:649.7px;font-size:9.8px;line-height:13.8px;color:#606266;">3</span>
<span class="t" style="left:1871.5px;top:650.1px;font-size:9px;line-height:13px;color:#606266;">盘锦辽河辽南能源有限公司</span>
<span class="t" style="left:2098.5px;top:650.1px;font-size:9px;line-height:13px;color:#606266;">入围</span>
<div class="abs" style="left:1789px;top:668px;width:542px;height:1px;background:#ebeef5"></div>
<span class="t" style="left:1796px;top:676.9px;font-size:9.8px;line-height:13.8px;color:#606266;">4</span>
<span class="t" style="left:1871.5px;top:677.3px;font-size:9px;line-height:13px;color:#606266;">盘锦辽油华联实业集团有限公司</span>
<span class="t" style="left:2098.5px;top:677.3px;font-size:9px;line-height:13px;color:#606266;">入围</span>
<div class="abs" style="left:1789px;top:696px;width:542px;height:1px;background:#ebeef5"></div>
<span class="t" style="left:1796px;top:704.1px;font-size:9.8px;line-height:13.8px;color:#606266;">5</span>
<span class="t" style="left:1871.5px;top:704.5px;font-size:9px;line-height:13px;color:#606266;">盘锦辽河金宇生态环境有限公司</span>
<span class="t" style="left:2098.5px;top:704.5px;font-size:9px;line-height:13px;color:#606266;">入围</span>
<div class="abs" style="left:1789px;top:723px;width:542px;height:1px;background:#ebeef5"></div>
<span class="t" style="left:1796px;top:731.3px;font-size:9.8px;line-height:13.8px;color:#606266;">6</span>
<span class="t" style="left:1871.5px;top:731.7px;font-size:9px;line-height:13px;color:#606266;">盘锦金宇混凝土构件有限公司</span>
<span class="t" style="left:2098.5px;top:731.7px;font-size:9px;line-height:13px;color:#606266;">入围</span>
<div class="abs" style="left:1789px;top:750px;width:542px;height:1px;background:#ebeef5"></div>
<span class="t" style="left:1796px;top:758.5px;font-size:9.8px;line-height:13.8px;color:#606266;">7</span>
<span class="t" style="left:1871.5px;top:758.9px;font-size:9px;line-height:13px;color:#606266;">盘锦大力建安工程有限公司</span>
<span class="t" style="left:2098.5px;top:758.9px;font-size:9px;line-height:13px;color:#606266;">入围</span>
<div class="abs" style="left:1789px;top:777px;width:542px;height:1px;background:#ebeef5"></div>
<span class="t" style="left:1796px;top:785.7px;font-size:9.8px;line-height:13.8px;color:#606266;">8</span>
<span class="t" style="left:1871.5px;top:786.1px;font-size:9px;line-height:13px;color:#606266;">盘锦洪鹏再生资源科技有限公司</span>
<span class="t" style="left:2098.5px;top:786.1px;font-size:9px;line-height:13px;color:#606266;">入围</span>
<div class="abs" style="left:1789px;top:804px;width:542px;height:1px;background:#ebeef5"></div>
<span class="t" style="left:1796px;top:812.9px;font-size:9.8px;line-height:13.8px;color:#606266;">9</span>
<span class="t" style="left:1871.5px;top:813.3px;font-size:9px;line-height:13px;color:#606266;">沈阳油隆建筑安装工程有限责任公司</span>
<span class="t" style="left:2098.5px;top:813.3px;font-size:9px;line-height:13px;color:#606266;">入围</span>
<div class="abs" style="left:1789px;top:832px;width:542px;height:1px;background:#ebeef5"></div>
<span class="t" style="left:1796px;top:840.1px;font-size:9.8px;line-height:13.8px;color:#606266;">10</span>
<span class="t" style="left:1871.5px;top:840.5px;font-size:9px;line-height:13px;color:#606266;">辽宁辽河金晟达建设实业有限公司</span>
<span class="t" style="left:2098.5px;top:840.5px;font-size:9px;line-height:13px;color:#606266;">入围</span>
<span class="t" style="left:2330px;top:845.0px;font-size:12px;line-height:16px;color:#8c8c8c;"><span class="pm" style="font-size:12px">↵</span></span>
<span class="t" style="left:1768px;top:864.0px;font-size:12px;line-height:16px;color:#8c8c8c;"><span class="pm" style="font-size:12px">↵</span></span>
<span class="t" style="left:1943.5px;top:885.5px;font-size:12px;line-height:16px;color:#8c8c8c;"><span class="pm" style="font-size:12px">↵</span></span>
<!-- word status bar -->
<div class="abs" style="left:521px;top:1016px;width:1918px;height:22px;background:#f3f3f3;border-top:1px solid #c6c6c6"></div>
<span class="t" style="left:533px;top:1019.5px;font-size:12px;line-height:16px;color:#444;">第 63 页，共 161 页</span>
<span class="t" style="left:664px;top:1019.5px;font-size:12px;line-height:16px;color:#444;">5/37913 个字</span>
<svg style="left:764px;top:1021px" width="15" height="13" viewBox="0 0 15 13"><path d="M5.5 2V12M5.5 2C4 1 2 1 .5 1.5V11.5C2 11 4 11 5.5 12C6.5 11.4 7.5 11.1 8.5 11" fill="none" stroke="#666" stroke-width="1"/><path d="M5.5 2C6.5 1.3 7.5 1.1 8.5 1V3" fill="none" stroke="#666" stroke-width="1"/><path d="M9 4.5L13.5 9.5M13.5 4.5L9 9.5" stroke="#555" stroke-width="1.2"/></svg>
<span class="t" style="left:796px;top:1019.5px;font-size:12px;line-height:16px;color:#444;">英语(美国)</span>
<span class="t" style="left:918px;top:1019.5px;font-size:12px;line-height:16px;color:#444;">修订: 关闭</span>
<svg style="left:992px;top:1020px" width="16" height="14" viewBox="0 0 16 14"><circle cx="6" cy="6" r="5" fill="none" stroke="#555" stroke-width="1.1" stroke-dasharray="12 4"/><path d="M5.5 3V7H8" fill="none" stroke="#555" stroke-width="1.1"/><path d="M8 8L14 13.5M14 8L8 13.5" stroke="#444" stroke-width="1.6"/></svg>
<span class="t" style="left:1011px;top:1019.5px;font-size:12px;line-height:16px;color:#333;font-weight:bold">辅助功能: 调查</span>
<svg style="left:2149px;top:1021px" width="14" height="13" viewBox="0 0 14 13"><path d="M7 1.5V12M7 1.5C5 .3 2.5 .3 .5 1V11.5C2.5 10.8 5 10.8 7 12C9 10.8 11.5 10.8 13.5 11.5V1C11.5 .3 9 .3 7 1.5Z" fill="none" stroke="#555" stroke-width="1"/><path d="M2 3.5H5.5M2 5.5H5.5M2 7.5H5.5M8.5 3.5H12M8.5 5.5H12M8.5 7.5H12" stroke="#555" stroke-width=".8"/></svg>
<div class="abs" style="left:2176px;top:1017px;width:40px;height:21px;background:#c6c6c6"></div>
<svg style="left:2189px;top:1021px" width="14" height="13" viewBox="0 0 14 13"><rect x=".5" y=".5" width="13" height="12" fill="none" stroke="#555"/><path d="M2.5 2.6H11.5M2.5 4.8H11.5M2.5 7H11.5M2.5 9.2H11.5M2.5 11.2H11.5" stroke="#555" stroke-width=".9"/></svg>
<svg style="left:2229px;top:1021px" width="15" height="13" viewBox="0 0 15 13"><path d="M.5 .5H11.5V5M.5 .5V11.5H6" fill="none" stroke="#555"/><path d="M2.5 3H9.5M2.5 5.5H9.5M2.5 8H6" stroke="#555" stroke-width=".9"/><circle cx="10.8" cy="9.2" r="3.6" fill="#8a8a8a" stroke="#555"/><path d="M8.5 8C9.5 9.5 10.5 8.5 11 10.5M11.5 6.5C12.5 7.5 13.5 8 13.8 9.5" fill="none" stroke="#f3f3f3" stroke-width="1.1"/></svg>
<svg style="left:2262px;top:1027px" width="8" height="1" viewBox="0 0 8 1"><path d="M0 .5H8" stroke="#444"/></svg>
<div class="abs" style="left:2275px;top:1027px;width:100px;height:1px;background:#666"></div>
<div class="abs" style="left:2325px;top:1024px;width:1px;height:7px;background:#666"></div>
<div class="abs" style="left:2318px;top:1022px;width:5px;height:11px;background:#444"></div>
<svg style="left:2380px;top:1023px" width="8" height="9" viewBox="0 0 8 9"><path d="M0 4.5H8M4 .5V8.5" stroke="#444"/></svg>
<span class="t" style="left:2401px;top:1019.5px;font-size:12px;line-height:16px;color:#444;">90%</span>
</div></div>
<!-- red annotation box on notepad -->
<div class="abs" style="left:10px;top:732px;width:119px;height:42px;border:3px solid #c8102e"></div>
<!-- TASKBAR sliver -->
<div class="abs" style="left:0px;top:1037px;width:521px;height:1px;background:#5a5a5a"></div>
<div class="abs" style="left:0px;top:1038px;width:2439px;height:6px;background:linear-gradient(180deg,#22323b,#1a2830)"></div>
<div class="abs" style="left:717px;top:1038px;width:48px;height:6px;background:#b0682f"></div>
<div class="abs" style="left:1256px;top:1038px;width:48px;height:6px;background:#4b5a63"></div>
<div class="abs" style="left:2436px;top:1038px;width:1px;height:6px;background:#6b7981"></div>

</body>
</html>
